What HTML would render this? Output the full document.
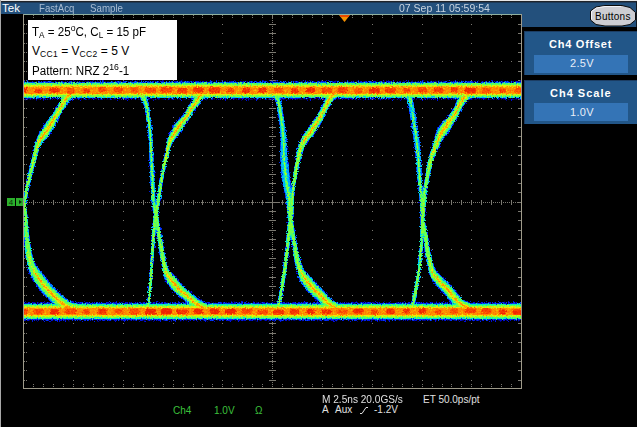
<!DOCTYPE html><html><head><meta charset="utf-8"><style>
html,body{margin:0;padding:0;width:637px;height:427px;overflow:hidden;background:#000}
body{position:relative;font-family:"Liberation Sans",sans-serif}
.t{position:absolute;white-space:nowrap;line-height:1}
</style></head><body>
<svg width="637" height="427" viewBox="0 0 637 427" style="position:absolute;left:0;top:0">
<defs><linearGradient id="tg" x1="0" x2="1" y1="0" y2="0"><stop offset="0" stop-color="#303030"/><stop offset="0.6" stop-color="#b8b8b8"/><stop offset="1" stop-color="#e8e8e8"/></linearGradient></defs>
<rect x="0" y="0" width="637" height="1" fill="#e6e6e6"/>
<rect x="0" y="1" width="637" height="1" fill="#20242a"/>
<rect x="0" y="2" width="637" height="1" fill="#1e3a58"/>
<rect x="0" y="3" width="637" height="11" fill="#23507c"/>
<rect x="522" y="14" width="115" height="13" fill="#23507c"/>
<rect x="0" y="0" width="1" height="427" fill="#a8a8a8"/>
<g shape-rendering="crispEdges">
<rect x="23" y="14" width="499" height="1" fill="#8fb0a0"/>
<rect x="23" y="388" width="499" height="1" fill="#9e9a8a"/>
<rect x="23" y="14" width="1" height="375" fill="#9e9a8a"/>
<rect x="521" y="14" width="1" height="375" fill="#9e9a8a"/>
<path d="M103,342h1v1h-1z M173,200h1v5h-1z M491,15h1v1h-1z M113,202h1v1h-1z M73,99h1v1h-1z M422,43h1v1h-1z M183,17h1v1h-1z M24,314h1v1h-1z M183,386h1v1h-1z M491,200h1v5h-1z M173,352h1v1h-1z M133,108h1v1h-1z M103,61h1v1h-1z M501,386h1v1h-1z M272,298h1v1h-1z M501,342h1v1h-1z M259,202h1v1h-1z M43,200h1v5h-1z M252,200h1v5h-1z M24,33h1v1h-1z M303,202h1v1h-1z M272,76h1v1h-1z M518,155h3v1h-3z M272,308h1v1h-1z M73,211h1v1h-1z M129,202h1v1h-1z M471,211h1v1h-1z M272,164h1v1h-1z M518,202h3v1h-3z M113,155h1v1h-1z M83,108h1v1h-1z M73,174h1v1h-1z M173,342h1v1h-1z M195,202h1v1h-1z M272,212h1v1h-1z M372,295h1v1h-1z M272,332h1v1h-1z M25,202h1v1h-1z M402,15h1v1h-1z M491,202h1v1h-1z M322,202h1v1h-1z M292,155h1v1h-1z M272,68h1v1h-1z M307,202h1v1h-1z M292,200h1v5h-1z M395,202h1v1h-1z M302,295h1v1h-1z M343,202h1v1h-1z M269,267h7v1h-7z M461,200h1v5h-1z M43,342h1v1h-1z M422,333h1v1h-1z M518,89h3v1h-3z M272,300h1v1h-1z M73,61h1v1h-1z M83,17h1v1h-1z M24,220h1v1h-1z M171,202h1v1h-1z M332,61h1v1h-1z M272,34h1v1h-1z M73,108h1v1h-1z M83,249h1v1h-1z M53,202h1v1h-1z M322,89h1v1h-1z M272,324h1v1h-1z M26,239h1v1h-1z M199,202h1v1h-1z M269,239h7v1h-7z M272,102h1v1h-1z M372,174h1v1h-1z M163,249h1v1h-1z M511,249h1v1h-1z M481,202h1v1h-1z M123,146h1v1h-1z M518,61h3v1h-3z M113,15h1v1h-1z M422,200h1v5h-1z M33,17h1v1h-1z M322,99h1v1h-1z M33,386h1v1h-1z M257,202h1v1h-1z M269,286h7v1h-7z M272,334h1v1h-1z M272,290h1v1h-1z M471,117h1v1h-1z M292,342h1v1h-1z M272,70h1v1h-1z M292,17h1v1h-1z M402,342h1v1h-1z M33,249h1v1h-1z M24,380h1v1h-1z M285,202h1v1h-1z M493,202h1v1h-1z M272,238h1v1h-1z M501,200h1v5h-1z M173,211h1v1h-1z M272,358h1v1h-1z M518,211h3v1h-3z M491,108h1v1h-1z M115,202h1v1h-1z M123,370h1v1h-1z M461,249h1v1h-1z M322,108h1v1h-1z M203,202h1v1h-1z M272,94h1v1h-1z M53,155h1v1h-1z M63,15h1v1h-1z M63,384h1v1h-1z M207,202h1v1h-1z M322,15h1v1h-1z M272,326h1v1h-1z M111,202h1v1h-1z M133,200h1v5h-1z M173,80h1v1h-1z M518,220h3v1h-3z M297,202h1v1h-1z M45,202h1v1h-1z M481,61h1v1h-1z M443,202h1v1h-1z M429,202h1v1h-1z M518,183h3v1h-3z M201,202h1v1h-1z M442,342h1v1h-1z M412,295h1v1h-1z M173,127h1v1h-1z M272,292h1v1h-1z M511,155h1v1h-1z M131,202h1v1h-1z M432,386h1v1h-1z M173,230h1v1h-1z M222,384h1v1h-1z M501,17h1v1h-1z M183,249h1v1h-1z M222,305h1v1h-1z M269,333h7v1h-7z M272,220h1v1h-1z M197,202h1v1h-1z M405,202h1v1h-1z M123,386h1v1h-1z M491,295h1v1h-1z M272,316h1v1h-1z M501,249h1v1h-1z M73,314h1v1h-1z M123,200h1v5h-1z M232,386h1v1h-1z M63,386h1v1h-1z M49,202h1v1h-1z M24,99h1v1h-1z M272,264h1v1h-1z M433,202h1v1h-1z M272,188h1v1h-1z M26,71h1v1h-1z M331,202h1v1h-1z M252,108h1v1h-1z M461,155h1v1h-1z M24,108h1v1h-1z M53,61h1v1h-1z M367,202h1v1h-1z M123,352h1v1h-1z M143,155h1v1h-1z M392,342h1v1h-1z M451,17h1v1h-1z M209,202h1v1h-1z M322,305h1v1h-1z M153,384h1v1h-1z M342,108h1v1h-1z M73,286h1v1h-1z M222,295h1v1h-1z M422,230h1v1h-1z M451,249h1v1h-1z M272,154h1v1h-1z M422,108h1v1h-1z M322,24h1v1h-1z M519,202h1v1h-1z M322,314h1v1h-1z M382,295h1v1h-1z M65,202h1v1h-1z M83,384h1v1h-1z M322,192h1v1h-1z M272,178h1v1h-1z M123,202h1v1h-1z M93,155h1v1h-1z M123,17h1v1h-1z M471,286h1v1h-1z M518,277h3v1h-3z M371,202h1v1h-1z M292,108h1v1h-1z M173,136h1v1h-1z M422,323h1v1h-1z M382,342h1v1h-1z M441,202h1v1h-1z M213,202h1v1h-1z M183,155h1v1h-1z M272,126h1v1h-1z M372,230h1v1h-1z M352,155h1v1h-1z M332,249h1v1h-1z M272,146h1v1h-1z M103,384h1v1h-1z M501,155h1v1h-1z M73,220h1v1h-1z M279,202h1v1h-1z M202,17h1v1h-1z M222,314h1v1h-1z M412,108h1v1h-1z M442,155h1v1h-1z M269,342h7v1h-7z M222,192h1v1h-1z M422,127h1v1h-1z M322,164h1v1h-1z M153,15h1v1h-1z M362,15h1v1h-1z M272,214h1v1h-1z M193,295h1v1h-1z M272,92h1v1h-1z M123,258h1v1h-1z M83,342h1v1h-1z M143,61h1v1h-1z M422,295h1v1h-1z M471,384h1v1h-1z M272,382h1v1h-1z M372,17h1v1h-1z M471,305h1v1h-1z M47,202h1v1h-1z M387,202h1v1h-1z M24,202h1v1h-1z M445,202h1v1h-1z M431,202h1v1h-1z M269,24h7v1h-7z M232,15h1v1h-1z M321,202h1v1h-1z M272,180h1v1h-1z M379,202h1v1h-1z M269,314h7v1h-7z M362,108h1v1h-1z M372,249h1v1h-1z M222,164h1v1h-1z M272,350h1v1h-1z M173,323h1v1h-1z M63,200h1v5h-1z M312,15h1v1h-1z M73,295h1v1h-1z M272,348h1v1h-1z M302,200h1v5h-1z M312,384h1v1h-1z M402,249h1v1h-1z M242,17h1v1h-1z M422,117h1v1h-1z M222,333h1v1h-1z M269,361h7v1h-7z M372,352h1v1h-1z M272,84h1v1h-1z M123,108h1v1h-1z M93,61h1v1h-1z M26,380h1v1h-1z M123,43h1v1h-1z M59,202h1v1h-1z M103,15h1v1h-1z M322,323h1v1h-1z M153,202h1v1h-1z M322,286h1v1h-1z M272,152h1v1h-1z M518,286h3v1h-3z M26,99h1v1h-1z M272,172h1v1h-1z M87,202h1v1h-1z M435,202h1v1h-1z M43,384h1v1h-1z M442,61h1v1h-1z M369,202h1v1h-1z M123,52h1v1h-1z M442,17h1v1h-1z M272,340h1v1h-1z M272,240h1v1h-1z M53,386h1v1h-1z M113,295h1v1h-1z M272,118h1v1h-1z M233,202h1v1h-1z M442,249h1v1h-1z M232,342h1v1h-1z M202,295h1v1h-1z M26,314h1v1h-1z M33,155h1v1h-1z M372,43h1v1h-1z M518,258h3v1h-3z M312,17h1v1h-1z M481,386h1v1h-1z M123,267h1v1h-1z M272,144h1v1h-1z M312,386h1v1h-1z M272,22h1v1h-1z M322,220h1v1h-1z M63,249h1v1h-1z M272,206h1v1h-1z M262,108h1v1h-1z M232,61h1v1h-1z M103,202h1v1h-1z M272,376h1v1h-1z M26,323h1v1h-1z M173,305h1v1h-1z M272,254h1v1h-1z M272,374h1v1h-1z M409,202h1v1h-1z M402,384h1v1h-1z M372,258h1v1h-1z M272,295h1v1h-1z M26,286h1v1h-1z M272,110h1v1h-1z M163,15h1v1h-1z M511,384h1v1h-1z M465,202h1v1h-1z M237,202h1v1h-1z M123,239h1v1h-1z M252,15h1v1h-1z M269,230h7v1h-7z M281,202h1v1h-1z M272,278h1v1h-1z M272,342h1v1h-1z M163,200h1v5h-1z M73,352h1v1h-1z M392,249h1v1h-1z M243,202h1v1h-1z M24,183h1v1h-1z M335,202h1v1h-1z M322,380h1v1h-1z M107,202h1v1h-1z M272,366h1v1h-1z M73,71h1v1h-1z M41,202h1v1h-1z M432,155h1v1h-1z M222,89h1v1h-1z M26,202h1v1h-1z M461,342h1v1h-1z M425,202h1v1h-1z M262,295h1v1h-1z M173,202h1v1h-1z M483,202h1v1h-1z M518,352h3v1h-3z M222,52h1v1h-1z M269,80h7v1h-7z M26,305h1v1h-1z M505,202h1v1h-1z M402,386h1v1h-1z M272,48h1v1h-1z M461,61h1v1h-1z M269,249h7v1h-7z M292,384h1v1h-1z M272,112h1v1h-1z M123,136h1v1h-1z M471,80h1v1h-1z M193,202h1v1h-1z M163,342h1v1h-1z M133,295h1v1h-1z M149,202h1v1h-1z M272,280h1v1h-1z M269,89h7v1h-7z M272,16h1v1h-1z M518,174h3v1h-3z M451,155h1v1h-1z M31,202h1v1h-1z M481,15h1v1h-1z M89,202h1v1h-1z M177,202h1v1h-1z M269,136h7v1h-7z M518,342h3v1h-3z M363,202h1v1h-1z M272,368h1v1h-1z M481,200h1v5h-1z M392,384h1v1h-1z M269,99h7v1h-7z M312,200h1v5h-1z M432,342h1v1h-1z M93,386h1v1h-1z M491,17h1v1h-1z M491,386h1v1h-1z M73,361h1v1h-1z M235,202h1v1h-1z M143,386h1v1h-1z M242,249h1v1h-1z M271,202h1v1h-1z M471,99h1v1h-1z M63,108h1v1h-1z M33,61h1v1h-1z M518,146h3v1h-3z M432,61h1v1h-1z M518,24h3v1h-3z M402,17h1v1h-1z M471,202h1v1h-1z M123,323h1v1h-1z M123,384h1v1h-1z M26,211h1v1h-1z M39,202h1v1h-1z M372,146h1v1h-1z M518,361h3v1h-3z M26,174h1v1h-1z M202,155h1v1h-1z M451,342h1v1h-1z M382,384h1v1h-1z M518,33h3v1h-3z M185,202h1v1h-1z M302,386h1v1h-1z M481,17h1v1h-1z M362,295h1v1h-1z M73,277h1v1h-1z M53,200h1v5h-1z M123,127h1v1h-1z M269,323h7v1h-7z M372,314h1v1h-1z M481,342h1v1h-1z M272,230h1v1h-1z M471,89h1v1h-1z M275,202h1v1h-1z M392,386h1v1h-1z M451,61h1v1h-1z M362,342h1v1h-1z M421,202h1v1h-1z M407,202h1v1h-1z M24,71h1v1h-1z M163,155h1v1h-1z M179,202h1v1h-1z M372,361h1v1h-1z M518,43h3v1h-3z M24,89h1v1h-1z M312,249h1v1h-1z M372,33h1v1h-1z M26,61h1v1h-1z M212,61h1v1h-1z M123,342h1v1h-1z M93,295h1v1h-1z M372,323h1v1h-1z M26,230h1v1h-1z M73,249h1v1h-1z M43,202h1v1h-1z M79,202h1v1h-1z M422,71h1v1h-1z M427,202h1v1h-1z M511,200h1v5h-1z M242,155h1v1h-1z M24,286h1v1h-1z M372,370h1v1h-1z M352,295h1v1h-1z M173,380h1v1h-1z M272,222h1v1h-1z M153,108h1v1h-1z M123,61h1v1h-1z M193,61h1v1h-1z M507,202h1v1h-1z M193,17h1v1h-1z M322,295h1v1h-1z M471,108h1v1h-1z M173,99h1v1h-1z M283,202h1v1h-1z M422,286h1v1h-1z M272,168h1v1h-1z M282,342h1v1h-1z M252,295h1v1h-1z M345,202h1v1h-1z M269,117h7v1h-7z M113,17h1v1h-1z M372,52h1v1h-1z M187,202h1v1h-1z M143,15h1v1h-1z M143,384h1v1h-1z M173,267h1v1h-1z M26,220h1v1h-1z M469,202h1v1h-1z M73,183h1v1h-1z M113,200h1v5h-1z M372,220h1v1h-1z M511,295h1v1h-1z M272,72h1v1h-1z M372,155h1v1h-1z M202,200h1v5h-1z M312,108h1v1h-1z M518,370h3v1h-3z M272,256h1v1h-1z M73,146h1v1h-1z M222,155h1v1h-1z M292,15h1v1h-1z M511,342h1v1h-1z M173,277h1v1h-1z M402,200h1v5h-1z M103,108h1v1h-1z M312,155h1v1h-1z M422,258h1v1h-1z M322,174h1v1h-1z M101,202h1v1h-1z M272,160h1v1h-1z M24,80h1v1h-1z M272,38h1v1h-1z M372,164h1v1h-1z M375,202h1v1h-1z M361,202h1v1h-1z M26,192h1v1h-1z M419,202h1v1h-1z M191,202h1v1h-1z M322,277h1v1h-1z M222,127h1v1h-1z M501,108h1v1h-1z M183,384h1v1h-1z M125,202h1v1h-1z M173,286h1v1h-1z M509,202h1v1h-1z M73,136h1v1h-1z M242,200h1v5h-1z M518,249h3v1h-3z M24,295h1v1h-1z M83,155h1v1h-1z M53,108h1v1h-1z M442,15h1v1h-1z M143,342h1v1h-1z M272,294h1v1h-1z M342,295h1v1h-1z M272,194h1v1h-1z M442,200h1v5h-1z M222,277h1v1h-1z M282,61h1v1h-1z M277,202h1v1h-1z M202,249h1v1h-1z M322,127h1v1h-1z M365,202h1v1h-1z M173,108h1v1h-1z M313,202h1v1h-1z M272,362h1v1h-1z M423,202h1v1h-1z M422,380h1v1h-1z M372,61h1v1h-1z M299,202h1v1h-1z M272,98h1v1h-1z M26,89h1v1h-1z M173,71h1v1h-1z M43,61h1v1h-1z M272,162h1v1h-1z M357,202h1v1h-1z M53,17h1v1h-1z M272,282h1v1h-1z M141,202h1v1h-1z M302,17h1v1h-1z M73,192h1v1h-1z M183,295h1v1h-1z M332,108h1v1h-1z M302,61h1v1h-1z M232,384h1v1h-1z M471,192h1v1h-1z M222,286h1v1h-1z M272,330h1v1h-1z M73,155h1v1h-1z M43,108h1v1h-1z M422,99h1v1h-1z M26,277h1v1h-1z M222,249h1v1h-1z M272,186h1v1h-1z M183,342h1v1h-1z M37,202h1v1h-1z M169,202h1v1h-1z M272,64h1v1h-1z M392,15h1v1h-1z M123,230h1v1h-1z M242,386h1v1h-1z M133,249h1v1h-1z M272,234h1v1h-1z M322,183h1v1h-1z M355,202h1v1h-1z M392,200h1v5h-1z M322,61h1v1h-1z M471,277h1v1h-1z M317,202h1v1h-1z M272,296h1v1h-1z M24,174h1v1h-1z M91,202h1v1h-1z M73,164h1v1h-1z M422,314h1v1h-1z M471,200h1v5h-1z M471,164h1v1h-1z M373,202h1v1h-1z M83,61h1v1h-1z M173,295h1v1h-1z M262,17h1v1h-1z M272,320h1v1h-1z M272,36h1v1h-1z M272,384h1v1h-1z M272,100h1v1h-1z M211,202h1v1h-1z M272,56h1v1h-1z M491,155h1v1h-1z M222,183h1v1h-1z M262,249h1v1h-1z M402,108h1v1h-1z M33,15h1v1h-1z M269,220h7v1h-7z M33,384h1v1h-1z M123,249h1v1h-1z M272,288h1v1h-1z M359,202h1v1h-1z M272,124h1v1h-1z M447,202h1v1h-1z M461,386h1v1h-1z M461,15h1v1h-1z M272,66h1v1h-1z M81,202h1v1h-1z M113,384h1v1h-1z M461,384h1v1h-1z M471,174h1v1h-1z M322,370h1v1h-1z M272,356h1v1h-1z M272,312h1v1h-1z M73,17h1v1h-1z M24,361h1v1h-1z M73,386h1v1h-1z M173,174h1v1h-1z M347,202h1v1h-1z M105,202h1v1h-1z M272,90h1v1h-1z M215,202h1v1h-1z M481,155h1v1h-1z M163,17h1v1h-1z M251,202h1v1h-1z M272,260h1v1h-1z M163,386h1v1h-1z M123,99h1v1h-1z M26,295h1v1h-1z M442,108h1v1h-1z M412,61h1v1h-1z M272,322h1v1h-1z M212,249h1v1h-1z M269,380h7v1h-7z M272,58h1v1h-1z M24,43h1v1h-1z M402,295h1v1h-1z M309,202h1v1h-1z M85,202h1v1h-1z M93,200h1v5h-1z M292,295h1v1h-1z M202,386h1v1h-1z M352,17h1v1h-1z M33,342h1v1h-1z M242,15h1v1h-1z M24,146h1v1h-1z M518,164h3v1h-3z M403,202h1v1h-1z M491,61h1v1h-1z M518,305h3v1h-3z M432,15h1v1h-1z M272,82h1v1h-1z M151,202h1v1h-1z M461,202h1v1h-1z M432,384h1v1h-1z M461,17h1v1h-1z M352,200h1v5h-1z M113,386h1v1h-1z M337,202h1v1h-1z M501,15h1v1h-1z M352,249h1v1h-1z M322,352h1v1h-1z M255,202h1v1h-1z M272,314h1v1h-1z M372,386h1v1h-1z M272,30h1v1h-1z M422,192h1v1h-1z M193,155h1v1h-1z M24,155h1v1h-1z M422,155h1v1h-1z M392,108h1v1h-1z M127,202h1v1h-1z M322,71h1v1h-1z M133,155h1v1h-1z M269,277h7v1h-7z M73,43h1v1h-1z M471,43h1v1h-1z M53,15h1v1h-1z M451,386h1v1h-1z M222,61h1v1h-1z M422,202h1v1h-1z M53,384h1v1h-1z M451,15h1v1h-1z M93,17h1v1h-1z M451,384h1v1h-1z M272,286h1v1h-1z M24,370h1v1h-1z M341,202h1v1h-1z M27,202h1v1h-1z M272,210h1v1h-1z M173,183h1v1h-1z M422,370h1v1h-1z M411,202h1v1h-1z M183,202h1v1h-1z M382,61h1v1h-1z M272,272h1v1h-1z M93,249h1v1h-1z M302,249h1v1h-1z M471,380h1v1h-1z M222,71h1v1h-1z M471,52h1v1h-1z M73,267h1v1h-1z M422,211h1v1h-1z M249,202h1v1h-1z M73,15h1v1h-1z M222,361h1v1h-1z M422,89h1v1h-1z M382,108h1v1h-1z M412,155h1v1h-1z M471,15h1v1h-1z M382,249h1v1h-1z M63,295h1v1h-1z M222,239h1v1h-1z M26,352h1v1h-1z M272,176h1v1h-1z M123,15h1v1h-1z M332,15h1v1h-1z M26,24h1v1h-1z M193,342h1v1h-1z M449,202h1v1h-1z M252,17h1v1h-1z M123,305h1v1h-1z M53,342h1v1h-1z M485,202h1v1h-1z M392,295h1v1h-1z M383,202h1v1h-1z M471,267h1v1h-1z M269,108h7v1h-7z M272,244h1v1h-1z M518,314h3v1h-3z M133,17h1v1h-1z M342,17h1v1h-1z M342,386h1v1h-1z M471,230h1v1h-1z M269,71h7v1h-7z M272,200h1v5h-1z M26,361h1v1h-1z M123,24h1v1h-1z M342,200h1v5h-1z M422,61h1v1h-1z M349,202h1v1h-1z M362,155h1v1h-1z M342,249h1v1h-1z M272,148h1v1h-1z M471,71h1v1h-1z M253,202h1v1h-1z M33,200h1v5h-1z M282,15h1v1h-1z M43,295h1v1h-1z M282,384h1v1h-1z M212,17h1v1h-1z M385,202h1v1h-1z M322,80h1v1h-1z M212,342h1v1h-1z M153,17h1v1h-1z M222,258h1v1h-1z M471,239h1v1h-1z M29,202h1v1h-1z M372,15h1v1h-1z M117,202h1v1h-1z M372,384h1v1h-1z M173,89h1v1h-1z M272,236h1v1h-1z M292,386h1v1h-1z M26,183h1v1h-1z M272,114h1v1h-1z M399,202h1v1h-1z M372,183h1v1h-1z M352,108h1v1h-1z M269,127h7v1h-7z M332,17h1v1h-1z M518,333h3v1h-3z M242,108h1v1h-1z M26,146h1v1h-1z M57,202h1v1h-1z M173,192h1v1h-1z M269,295h7v1h-7z M412,17h1v1h-1z M412,386h1v1h-1z M272,202h1v1h-1z M222,80h1v1h-1z M322,52h1v1h-1z M422,220h1v1h-1z M518,52h3v1h-3z M123,211h1v1h-1z M83,295h1v1h-1z M222,370h1v1h-1z M113,342h1v1h-1z M412,249h1v1h-1z M372,333h1v1h-1z M272,370h1v1h-1z M422,183h1v1h-1z M202,342h1v1h-1z M261,202h1v1h-1z M33,202h1v1h-1z M26,33h1v1h-1z M272,270h1v1h-1z M121,202h1v1h-1z M272,106h1v1h-1z M352,384h1v1h-1z M103,17h1v1h-1z M165,202h1v1h-1z M123,314h1v1h-1z M282,386h1v1h-1z M113,61h1v1h-1z M322,267h1v1h-1z M99,202h1v1h-1z M439,202h1v1h-1z M262,155h1v1h-1z M432,200h1v5h-1z M232,108h1v1h-1z M202,61h1v1h-1z M272,338h1v1h-1z M497,202h1v1h-1z M471,361h1v1h-1z M442,384h1v1h-1z M26,80h1v1h-1z M272,174h1v1h-1z M24,258h1v1h-1z M372,342h1v1h-1z M272,52h1v1h-1z M26,370h1v1h-1z M123,33h1v1h-1z M272,116h1v1h-1z M372,305h1v1h-1z M242,295h1v1h-1z M302,155h1v1h-1z M272,284h1v1h-1z M133,15h1v1h-1z M272,262h1v1h-1z M272,20h1v1h-1z M272,140h1v1h-1z M123,164h1v1h-1z M242,342h1v1h-1z M339,202h1v1h-1z M272,204h1v1h-1z M372,24h1v1h-1z M272,61h1v1h-1z M518,239h3v1h-3z M26,52h1v1h-1z M153,295h1v1h-1z M382,200h1v5h-1z M273,202h1v1h-1z M173,239h1v1h-1z M205,202h1v1h-1z M123,333h1v1h-1z M302,384h1v1h-1z M272,372h1v1h-1z M451,200h1v5h-1z M372,192h1v1h-1z M471,295h1v1h-1z M487,202h1v1h-1z M272,44h1v1h-1z M173,17h1v1h-1z M77,202h1v1h-1z M272,108h1v1h-1z M272,228h1v1h-1z M352,386h1v1h-1z M24,277h1v1h-1z M432,17h1v1h-1z M272,276h1v1h-1z M173,249h1v1h-1z M266,202h13v1h-13z M272,132h1v1h-1z M24,117h1v1h-1z M272,196h1v1h-1z M123,220h1v1h-1z M432,249h1v1h-1z M491,249h1v1h-1z M247,202h1v1h-1z M312,295h1v1h-1z M73,333h1v1h-1z M461,108h1v1h-1z M422,277h1v1h-1z M291,202h1v1h-1z M262,61h1v1h-1z M272,364h1v1h-1z M24,164h1v1h-1z M173,258h1v1h-1z M133,342h1v1h-1z M103,295h1v1h-1z M119,202h1v1h-1z M272,78h1v1h-1z M272,142h1v1h-1z M155,202h1v1h-1z M24,267h1v1h-1z M422,17h1v1h-1z M437,202h1v1h-1z M222,146h1v1h-1z M272,310h1v1h-1z M495,202h1v1h-1z M147,202h1v1h-1z M163,108h1v1h-1z M133,61h1v1h-1z M269,183h7v1h-7z M272,46h1v1h-1z M53,249h1v1h-1z M272,166h1v1h-1z M517,202h1v1h-1z M73,200h1v5h-1z M153,386h1v1h-1z M282,200h1v5h-1z M333,202h1v1h-1z M295,202h1v1h-1z M292,61h1v1h-1z M518,108h3v1h-3z M272,134h1v1h-1z M73,24h1v1h-1z M33,108h1v1h-1z M322,146h1v1h-1z M432,108h1v1h-1z M332,384h1v1h-1z M518,71h3v1h-3z M159,202h1v1h-1z M272,302h1v1h-1z M73,127h1v1h-1z M189,202h1v1h-1z M499,202h1v1h-1z M93,384h1v1h-1z M26,258h1v1h-1z M232,200h1v5h-1z M518,323h3v1h-3z M491,384h1v1h-1z M322,155h1v1h-1z M123,89h1v1h-1z M322,200h1v5h-1z M332,295h1v1h-1z M272,268h1v1h-1z M103,386h1v1h-1z M163,295h1v1h-1z M73,342h1v1h-1z M269,305h7v1h-7z M272,28h1v1h-1z M252,155h1v1h-1z M282,17h1v1h-1z M471,136h1v1h-1z M245,202h1v1h-1z M518,127h3v1h-3z M451,108h1v1h-1z M332,342h1v1h-1z M391,202h1v1h-1z M163,202h1v1h-1z M272,336h1v1h-1z M362,61h1v1h-1z M282,249h1v1h-1z M372,80h1v1h-1z M325,202h1v1h-1z M311,202h1v1h-1z M481,108h1v1h-1z M518,295h3v1h-3z M471,183h1v1h-1z M113,249h1v1h-1z M83,202h1v1h-1z M518,230h3v1h-3z M167,202h1v1h-1z M93,342h1v1h-1z M229,202h1v1h-1z M222,200h1v5h-1z M269,192h7v1h-7z M372,127h1v1h-1z M511,202h1v1h-1z M272,304h1v1h-1z M26,155h1v1h-1z M173,386h1v1h-1z M212,155h1v1h-1z M382,15h1v1h-1z M352,342h1v1h-1z M63,17h1v1h-1z M287,202h1v1h-1z M222,352h1v1h-1z M491,342h1v1h-1z M477,202h1v1h-1z M322,342h1v1h-1z M518,117h3v1h-3z M322,17h1v1h-1z M272,328h1v1h-1z M73,33h1v1h-1z M322,386h1v1h-1z M272,252h1v1h-1z M381,202h1v1h-1z M392,17h1v1h-1z M24,52h1v1h-1z M352,61h1v1h-1z M26,164h1v1h-1z M173,146h1v1h-1z M252,342h1v1h-1z M315,202h1v1h-1z M173,24h1v1h-1z M322,249h1v1h-1z M183,200h1v5h-1z M157,202h1v1h-1z M173,314h1v1h-1z M26,267h1v1h-1z M262,384h1v1h-1z M143,202h1v1h-1z M73,230h1v1h-1z M83,200h1v5h-1z M481,295h1v1h-1z M489,202h1v1h-1z M471,370h1v1h-1z M269,211h7v1h-7z M422,52h1v1h-1z M342,155h1v1h-1z M269,352h7v1h-7z M193,15h1v1h-1z M222,202h1v1h-1z M193,384h1v1h-1z M222,17h1v1h-1z M173,361h1v1h-1z M222,386h1v1h-1z M422,15h1v1h-1z M173,33h1v1h-1z M302,342h1v1h-1z M282,155h1v1h-1z M511,61h1v1h-1z M518,136h3v1h-3z M382,17h1v1h-1z M272,196h1v13h-1z M319,202h1v1h-1z M422,352h1v1h-1z M372,89h1v1h-1z M511,108h1v1h-1z M173,43h1v1h-1z M161,202h1v1h-1z M272,190h1v1h-1z M422,24h1v1h-1z M323,202h1v1h-1z M479,202h1v1h-1z M372,136h1v1h-1z M241,202h1v1h-1z M227,202h1v1h-1z M212,384h1v1h-1z M322,43h1v1h-1z M412,15h1v1h-1z M272,158h1v1h-1z M501,202h1v1h-1z M153,200h1v5h-1z M262,386h1v1h-1z M123,117h1v1h-1z M471,386h1v1h-1z M153,249h1v1h-1z M272,156h1v1h-1z M422,239h1v1h-1z M342,342h1v1h-1z M422,174h1v1h-1z M412,200h1v5h-1z M322,211h1v1h-1z M193,386h1v1h-1z M282,108h1v1h-1z M252,61h1v1h-1z M24,61h1v1h-1z M397,202h1v1h-1z M173,155h1v1h-1z M143,108h1v1h-1z M272,104h1v1h-1z M422,342h1v1h-1z M272,60h1v1h-1z M322,258h1v1h-1z M372,108h1v1h-1z M342,61h1v1h-1z M471,352h1v1h-1z M222,108h1v1h-1z M327,202h1v1h-1z M222,43h1v1h-1z M73,239h1v1h-1z M202,15h1v1h-1z M202,384h1v1h-1z M73,117h1v1h-1z M272,128h1v1h-1z M272,192h1v1h-1z M222,211h1v1h-1z M43,155h1v1h-1z M422,146h1v1h-1z M173,370h1v1h-1z M372,117h1v1h-1z M123,277h1v1h-1z M95,202h1v1h-1z M272,360h1v1h-1z M103,200h1v5h-1z M222,380h1v1h-1z M183,61h1v1h-1z M212,386h1v1h-1z M123,155h1v1h-1z M103,249h1v1h-1z M272,32h1v1h-1z M322,230h1v1h-1z M272,96h1v1h-1z M377,202h1v1h-1z M272,216h1v1h-1z M26,43h1v1h-1z M413,202h1v1h-1z M43,15h1v1h-1z M501,61h1v1h-1z M412,342h1v1h-1z M222,15h1v1h-1z M269,43h7v1h-7z M471,17h1v1h-1z M35,202h1v1h-1z M183,108h1v1h-1z M422,361h1v1h-1z M272,15h1v1h-1z M173,52h1v1h-1z M362,249h1v1h-1z M73,89h1v1h-1z M422,33h1v1h-1z M133,384h1v1h-1z M272,120h1v1h-1z M272,184h1v1h-1z M143,295h1v1h-1z M471,249h1v1h-1z M232,17h1v1h-1z M73,258h1v1h-1z M222,267h1v1h-1z M272,62h1v1h-1z M272,182h1v1h-1z M242,384h1v1h-1z M272,246h1v1h-1z M422,80h1v1h-1z M322,117h1v1h-1z M181,202h1v1h-1z M272,352h1v1h-1z M222,230h1v1h-1z M312,61h1v1h-1z M239,202h1v1h-1z M232,249h1v1h-1z M173,61h1v1h-1z M272,130h1v1h-1z M272,86h1v1h-1z M272,150h1v1h-1z M123,174h1v1h-1z M329,202h1v1h-1z M471,258h1v1h-1z M417,202h1v1h-1z M475,202h1v1h-1z M51,202h1v1h-1z M262,15h1v1h-1z M351,202h1v1h-1z M272,318h1v1h-1z M518,192h3v1h-3z M372,202h1v1h-1z M272,218h1v1h-1z M222,117h1v1h-1z M272,54h1v1h-1z M302,108h1v1h-1z M262,200h1v5h-1z M43,17h1v1h-1z M43,386h1v1h-1z M332,200h1v5h-1z M272,17h1v1h-1z M272,386h1v1h-1z M193,200h1v5h-1z M222,220h1v1h-1z M26,333h1v1h-1z M322,136h1v1h-1z M221,202h1v1h-1z M133,386h1v1h-1z M272,122h1v1h-1z M442,295h1v1h-1z M503,202h1v1h-1z M322,239h1v1h-1z M272,354h1v1h-1z M93,202h1v1h-1z M55,202h1v1h-1z M24,230h1v1h-1z M73,384h1v1h-1z M272,24h1v1h-1z M26,342h1v1h-1z M272,88h1v1h-1z M212,15h1v1h-1z M269,146h7v1h-7z M372,277h1v1h-1z M163,384h1v1h-1z M143,200h1v5h-1z M272,378h1v1h-1z M402,61h1v1h-1z M83,386h1v1h-1z M212,200h1v5h-1z M372,200h1v5h-1z M263,202h1v1h-1z M262,342h1v1h-1z M232,295h1v1h-1z M63,155h1v1h-1z M225,202h1v1h-1z M222,99h1v1h-1z M269,202h1v1h-1z M352,15h1v1h-1z M272,344h1v1h-1z M392,155h1v1h-1z M63,202h1v1h-1z M123,183h1v1h-1z M97,202h1v1h-1z M133,202h1v1h-1z M272,80h1v1h-1z M193,249h1v1h-1z M252,249h1v1h-1z M24,249h1v1h-1z M67,202h1v1h-1z M415,202h1v1h-1z M24,127h1v1h-1z M473,202h1v1h-1z M451,202h1v1h-1z M362,17h1v1h-1z M372,211h1v1h-1z M272,248h1v1h-1z M362,386h1v1h-1z M123,380h1v1h-1z M362,200h1v5h-1z M267,202h1v1h-1z M272,26h1v1h-1z M123,192h1v1h-1z M442,386h1v1h-1z M73,305h1v1h-1z M422,249h1v1h-1z M93,108h1v1h-1z M272,380h1v1h-1z M222,323h1v1h-1z M272,258h1v1h-1z M24,136h1v1h-1z M219,202h1v1h-1z M422,136h1v1h-1z M382,155h1v1h-1z M63,342h1v1h-1z M33,295h1v1h-1z M515,202h1v1h-1z M322,333h1v1h-1z M137,202h1v1h-1z M93,15h1v1h-1z M302,15h1v1h-1z M471,146h1v1h-1z M173,117h1v1h-1z M71,202h1v1h-1z M461,295h1v1h-1z M455,202h1v1h-1z M272,346h1v1h-1z M353,202h1v1h-1z M513,202h1v1h-1z M471,314h1v1h-1z M269,155h7v1h-7z M272,18h1v1h-1z M389,202h1v1h-1z M269,33h7v1h-7z M173,164h1v1h-1z M193,108h1v1h-1z M123,71h1v1h-1z M269,202h7v1h-7z M322,384h1v1h-1z M392,61h1v1h-1z M272,250h1v1h-1z M332,155h1v1h-1z M471,33h1v1h-1z M518,80h3v1h-3z M481,249h1v1h-1z M223,202h1v1h-1z M222,342h1v1h-1z M269,370h7v1h-7z M252,384h1v1h-1z M83,15h1v1h-1z M272,242h1v1h-1z M272,274h1v1h-1z M272,198h1v1h-1z M289,202h1v1h-1z M342,15h1v1h-1z M75,202h1v1h-1z M61,202h1v1h-1z M24,323h1v1h-1z M123,286h1v1h-1z M342,384h1v1h-1z M511,15h1v1h-1z M459,202h1v1h-1z M145,202h1v1h-1z M26,108h1v1h-1z M393,202h1v1h-1z M471,333h1v1h-1z M269,174h7v1h-7z M518,380h3v1h-3z M212,108h1v1h-1z M222,24h1v1h-1z M422,384h1v1h-1z M463,202h1v1h-1z M272,266h1v1h-1z M269,52h7v1h-7z M432,295h1v1h-1z M481,384h1v1h-1z M272,208h1v1h-1z M43,249h1v1h-1z M501,295h1v1h-1z M265,202h1v1h-1z M382,386h1v1h-1z M272,249h1v1h-1z M24,333h1v1h-1z M301,202h1v1h-1z M63,61h1v1h-1z M73,323h1v1h-1z M422,267h1v1h-1z M518,99h3v1h-3z M153,155h1v1h-1z M272,170h1v1h-1z M53,295h1v1h-1z M26,117h1v1h-1z M402,155h1v1h-1z M372,380h1v1h-1z M272,232h1v1h-1z M471,220h1v1h-1z M231,202h1v1h-1z M293,202h1v1h-1z M471,155h1v1h-1z M518,267h3v1h-3z M123,361h1v1h-1z M135,202h1v1h-1z M252,386h1v1h-1z M113,108h1v1h-1z M222,136h1v1h-1z M26,249h1v1h-1z M24,342h1v1h-1z M471,323h1v1h-1z M269,164h7v1h-7z M69,202h1v1h-1z M372,99h1v1h-1z M272,136h1v1h-1z M232,155h1v1h-1z M202,108h1v1h-1z M26,127h1v1h-1z M412,384h1v1h-1z M451,295h1v1h-1z M453,202h1v1h-1z M467,202h1v1h-1z M272,200h1v1h-1z M24,305h1v1h-1z M332,386h1v1h-1z M511,17h1v1h-1z M511,386h1v1h-1z M163,61h1v1h-1z M123,80h1v1h-1z M372,267h1v1h-1z M322,33h1v1h-1z M212,295h1v1h-1z M305,202h1v1h-1z M422,386h1v1h-1z M24,352h1v1h-1z M471,127h1v1h-1z M272,224h1v1h-1z M24,24h1v1h-1z M422,164h1v1h-1z M26,136h1v1h-1z M103,155h1v1h-1z M422,305h1v1h-1z M372,71h1v1h-1z M242,61h1v1h-1z M24,192h1v1h-1z M183,15h1v1h-1z M153,342h1v1h-1z M123,295h1v1h-1z M139,202h1v1h-1z M362,384h1v1h-1z M175,202h1v1h-1z M272,50h1v1h-1z M73,202h1v1h-1z M372,239h1v1h-1z M471,342h1v1h-1z M73,80h1v1h-1z M109,202h1v1h-1z M457,202h1v1h-1z M143,17h1v1h-1z M501,384h1v1h-1z M272,155h1v1h-1z M222,33h1v1h-1z M24,239h1v1h-1z M269,61h7v1h-7z M222,174h1v1h-1z M173,333h1v1h-1z M73,370h1v1h-1z M153,61h1v1h-1z M272,74h1v1h-1z M372,286h1v1h-1z M272,138h1v1h-1z M143,249h1v1h-1z M471,61h1v1h-1z M269,258h7v1h-7z M471,24h1v1h-1z M272,306h1v1h-1z M312,342h1v1h-1z M282,295h1v1h-1z M401,202h1v1h-1z M73,380h1v1h-1z M322,361h1v1h-1z M272,42h1v1h-1z M217,202h1v1h-1z M173,15h1v1h-1z M292,249h1v1h-1z M73,52h1v1h-1z M272,226h1v1h-1z M173,384h1v1h-1z M173,220h1v1h-1z M24,211h1v1h-1z M272,40h1v1h-1z" fill="#7a7870"/>
</g>
<defs><filter id="heat" x="0" y="0" width="637" height="427" filterUnits="userSpaceOnUse" color-interpolation-filters="sRGB"><feTurbulence type="fractalNoise" baseFrequency="0.8" numOctaves="1" seed="5" result="t"/><feDisplacementMap in="SourceGraphic" in2="t" scale="4" xChannelSelector="R" yChannelSelector="G" result="d"/><feGaussianBlur in="d" stdDeviation="0.6" result="b"/><feTurbulence type="fractalNoise" baseFrequency="0.6" numOctaves="2" seed="11" result="n0"/><feColorMatrix in="n0" type="matrix" values="1 0 0 0 0  1 0 0 0 0  1 0 0 0 0  0 0 0 0 1" result="n"/><feComposite in="b" in2="n" operator="arithmetic" k1="0.1" k2="0.95" k3="0.16" k4="-0.08" result="c"/><feColorMatrix in="c" type="matrix" values="1 0 0 0 0  0 1 0 0 0  0 0 1 0 0  1 0 0 0 0" result="ca"/><feComponentTransfer in="ca"><feFuncR type="table" tableValues="0.000 0.000 0.000 0.000 0.000 0.000 0.000 0.000 0.000 0.000 0.000 0.000 0.000 0.000 0.000 0.052 0.139 0.227 0.314 0.394 0.474 0.554 0.635 0.712 0.789 0.865 0.941 0.956 0.971 0.985 1.000 1.000 1.000 1.000 1.000 1.000 0.990 0.978 0.966 0.953 0.941"/><feFuncG type="table" tableValues="0.000 0.000 0.000 0.000 0.039 0.137 0.235 0.328 0.418 0.508 0.598 0.688 0.765 0.838 0.912 0.951 0.967 0.984 1.000 1.000 1.000 1.000 1.000 0.990 0.974 0.958 0.941 0.853 0.765 0.676 0.588 0.539 0.490 0.441 0.392 0.343 0.301 0.260 0.219 0.178 0.137"/><feFuncB type="table" tableValues="0.000 0.000 0.000 0.412 0.849 0.912 0.975 1.000 1.000 1.000 1.000 1.000 0.946 0.879 0.811 0.719 0.610 0.501 0.392 0.330 0.267 0.205 0.143 0.098 0.065 0.033 0.000 0.000 0.000 0.000 0.000 0.000 0.000 0.000 0.000 0.000 0.000 0.000 0.000 0.000 0.000"/><feFuncA type="linear" slope="30" intercept="-1.8"/></feComponentTransfer></filter>
<clipPath id="gc"><rect x="24" y="15" width="497" height="373"/></clipPath></defs>
<g clip-path="url(#gc)"><g filter="url(#heat)">
<rect x="0" y="0" width="637" height="427" fill="#000"/>
<rect x="17" y="80.45" width="510" height="19.5" fill="#161616"/><rect x="17" y="82.45" width="510" height="15.5" fill="#474747"/><rect x="17" y="83.20" width="510" height="14" fill="#7a7a7a"/><rect x="17" y="85.20" width="510" height="10" fill="#9e9e9e"/><rect x="17" y="86.45" width="510" height="7.5" fill="#c4c4c4"/><rect x="2.7" y="87.7" width="7.7" height="5.8" rx="2" fill="#e8e8e8"/><rect x="17.8" y="87.8" width="9.5" height="5.2" rx="2" fill="#f9f9f9"/><rect x="34.8" y="88.4" width="7.5" height="4.5" rx="2" fill="#eeeeee"/><rect x="49.1" y="87.9" width="10.8" height="4.5" rx="2" fill="#f6f6f6"/><rect x="66.4" y="87.8" width="8.1" height="5.9" rx="2" fill="#e1e1e1"/><rect x="82.9" y="88.2" width="7.1" height="5.3" rx="2" fill="#ececec"/><rect x="98.5" y="87.0" width="8.1" height="5.1" rx="2" fill="#e7e7e7"/><rect x="113.9" y="87.2" width="9.2" height="5.2" rx="2" fill="#e7e7e7"/><rect x="130.5" y="87.3" width="8.1" height="5.2" rx="2" fill="#e1e1e1"/><rect x="144.9" y="87.7" width="11.2" height="5.3" rx="2" fill="#e6e6e6"/><rect x="160.5" y="86.8" width="12.0" height="5.8" rx="2" fill="#ebebeb"/><rect x="177.2" y="88.0" width="10.6" height="5.6" rx="2" fill="#ededed"/><rect x="192.9" y="87.2" width="11.2" height="5.5" rx="2" fill="#f2f2f2"/><rect x="208.8" y="87.3" width="11.4" height="5.8" rx="2" fill="#f2f2f2"/><rect x="226.9" y="88.2" width="7.2" height="4.9" rx="2" fill="#ededed"/><rect x="242.6" y="87.8" width="7.9" height="5.3" rx="2" fill="#f5f5f5"/><rect x="258.1" y="87.6" width="8.9" height="5.2" rx="2" fill="#f8f8f8"/><rect x="273.7" y="87.6" width="9.6" height="5.1" rx="2" fill="#e1e1e1"/><rect x="290.9" y="88.1" width="7.2" height="5.6" rx="2" fill="#f3f3f3"/><rect x="306.0" y="87.8" width="9.0" height="4.8" rx="2" fill="#fefefe"/><rect x="321.1" y="88.0" width="10.9" height="5.3" rx="2" fill="#e8e8e8"/><rect x="337.7" y="87.3" width="9.6" height="5.9" rx="2" fill="#eeeeee"/><rect x="354.3" y="88.2" width="8.3" height="5.3" rx="2" fill="#e1e1e1"/><rect x="369.0" y="87.9" width="10.9" height="5.7" rx="2" fill="#f7f7f7"/><rect x="385.0" y="87.6" width="11.0" height="5.3" rx="2" fill="#ededed"/><rect x="402.9" y="87.4" width="7.3" height="5.8" rx="2" fill="#e7e7e7"/><rect x="417.7" y="87.4" width="9.5" height="5.2" rx="2" fill="#ebebeb"/><rect x="433.7" y="87.6" width="9.7" height="5.4" rx="2" fill="#eeeeee"/><rect x="450.9" y="87.3" width="7.1" height="4.8" rx="2" fill="#f2f2f2"/><rect x="464.8" y="87.8" width="11.3" height="5.7" rx="2" fill="#f9f9f9"/><rect x="482.4" y="87.6" width="8.3" height="5.8" rx="2" fill="#e3e3e3"/><rect x="499.0" y="88.3" width="7.1" height="4.5" rx="2" fill="#e8e8e8"/><rect x="514.7" y="87.3" width="7.5" height="5.4" rx="2" fill="#e3e3e3"/>
<rect x="17" y="301.75" width="510" height="19.5" fill="#161616"/><rect x="17" y="303.75" width="510" height="15.5" fill="#474747"/><rect x="17" y="304.50" width="510" height="14" fill="#7a7a7a"/><rect x="17" y="306.50" width="510" height="10" fill="#9e9e9e"/><rect x="17" y="307.75" width="510" height="7.5" fill="#c4c4c4"/><rect x="0.6" y="307.9" width="11.8" height="5.9" rx="2" fill="#e3e3e3"/><rect x="16.9" y="308.9" width="11.2" height="5.6" rx="2" fill="#eaeaea"/><rect x="33.5" y="308.9" width="10.0" height="5.4" rx="2" fill="#e5e5e5"/><rect x="49.9" y="309.3" width="9.2" height="5.1" rx="2" fill="#ffffff"/><rect x="64.6" y="308.8" width="11.7" height="5.3" rx="2" fill="#e9e9e9"/><rect x="82.9" y="309.2" width="7.2" height="4.5" rx="2" fill="#eaeaea"/><rect x="98.0" y="308.6" width="8.9" height="5.8" rx="2" fill="#f2f2f2"/><rect x="114.4" y="309.0" width="8.2" height="4.5" rx="2" fill="#e5e5e5"/><rect x="129.7" y="308.7" width="9.6" height="6.0" rx="2" fill="#e6e6e6"/><rect x="144.8" y="309.0" width="11.5" height="5.7" rx="2" fill="#fcfcfc"/><rect x="161.1" y="308.5" width="10.8" height="5.7" rx="2" fill="#fefefe"/><rect x="176.6" y="309.5" width="11.8" height="4.7" rx="2" fill="#f6f6f6"/><rect x="193.8" y="308.8" width="9.3" height="5.3" rx="2" fill="#fdfdfd"/><rect x="209.7" y="308.4" width="9.5" height="5.7" rx="2" fill="#fbfbfb"/><rect x="224.8" y="309.0" width="11.5" height="5.2" rx="2" fill="#fdfdfd"/><rect x="241.2" y="308.5" width="10.6" height="5.2" rx="2" fill="#eaeaea"/><rect x="257.3" y="309.7" width="10.5" height="4.7" rx="2" fill="#e9e9e9"/><rect x="272.7" y="309.7" width="11.6" height="5.0" rx="2" fill="#f6f6f6"/><rect x="289.7" y="309.1" width="9.5" height="5.3" rx="2" fill="#f2f2f2"/><rect x="306.2" y="309.1" width="8.6" height="4.8" rx="2" fill="#fdfdfd"/><rect x="321.4" y="309.6" width="10.1" height="4.6" rx="2" fill="#f7f7f7"/><rect x="336.7" y="309.4" width="11.5" height="4.8" rx="2" fill="#e2e2e2"/><rect x="353.4" y="308.7" width="10.3" height="4.9" rx="2" fill="#fbfbfb"/><rect x="370.7" y="309.4" width="7.5" height="5.3" rx="2" fill="#e8e8e8"/><rect x="386.5" y="308.5" width="8.1" height="5.8" rx="2" fill="#f6f6f6"/><rect x="402.9" y="308.5" width="7.2" height="5.0" rx="2" fill="#f5f5f5"/><rect x="418.8" y="307.9" width="7.4" height="5.9" rx="2" fill="#f7f7f7"/><rect x="434.9" y="309.5" width="7.1" height="4.9" rx="2" fill="#e5e5e5"/><rect x="450.5" y="308.6" width="7.9" height="5.5" rx="2" fill="#e2e2e2"/><rect x="464.5" y="308.5" width="12.0" height="4.7" rx="2" fill="#ebebeb"/><rect x="481.5" y="308.2" width="10.1" height="5.6" rx="2" fill="#ebebeb"/><rect x="498.9" y="309.3" width="7.2" height="5.2" rx="2" fill="#f7f7f7"/><rect x="512.7" y="309.2" width="11.5" height="5.6" rx="2" fill="#f6f6f6"/>
<g style="mix-blend-mode:lighten"><path d="M136.4,92.8 L137.4,94.4 L138.9,96.8 L140.5,99.5 L141.9,102.1 L143.0,104.1 L144.1,106.7 L144.6,109.4 L145.0,111.9 L145.4,114.9 L145.8,118.1 L146.2,121.3 L146.7,123.8 L147.1,125.9 L147.5,128.6 L148.0,133.2 L148.1,134.9 L148.2,137.0 L148.3,139.2 L148.4,141.5 L148.5,144.0 L148.6,146.7 L148.7,149.4 L148.9,152.1 L149.0,154.9 L149.1,157.7 L149.2,160.4 L149.3,163.1 L149.4,165.7 L149.5,168.1 L149.6,170.9 L149.7,173.8 L149.9,176.7 L150.0,179.6 L150.1,182.5 L150.2,185.4 L150.3,188.1 L150.4,190.8 L150.6,193.4 L150.7,195.8 L150.8,198.1 L151.0,200.2 L151.4,203.8 L151.8,206.7 L152.2,209.1 L152.7,211.2 L153.1,213.2 L153.5,215.4 L153.9,217.8 L154.3,220.0 L154.7,222.2 L155.1,224.6 L155.6,227.3 L156.0,230.4 L156.3,232.6 L156.7,235.1 L157.0,237.8 L157.4,240.6 L157.8,243.5 L158.2,246.4 L158.5,249.2 L158.9,251.9 L159.2,254.4 L159.5,256.5 L160.1,260.1 L160.7,263.0 L161.3,265.5 L161.8,267.8 L162.2,270.0 L162.7,273.2 L163.1,276.1 L163.9,278.9 L165.3,281.7 L167.0,284.4 L168.8,286.9 L170.6,289.3 L172.9,291.8 L175.5,294.3 L178.0,296.3 L180.4,298.1 L182.8,299.8 L184.8,301.4 L186.6,303.0 L188.5,304.8 L190.6,306.9 L193.2,309.0 L195.8,310.7 L198.6,312.3 L201.3,313.8 L203.5,315.0 L205.1,315.9 L210.9,304.1 L209.3,303.4 L206.9,302.4 L204.3,301.2 L201.9,300.0 L200.0,299.0 L198.1,297.8 L196.3,296.3 L194.4,294.6 L192.2,292.6 L189.8,290.7 L187.5,288.9 L185.5,287.2 L183.9,285.7 L182.0,283.6 L180.4,281.4 L178.6,279.1 L176.7,276.9 L174.8,274.9 L173.1,273.1 L171.4,271.7 L169.9,270.3 L168.4,268.0 L167.7,266.2 L167.2,264.2 L166.7,261.8 L166.1,259.0 L165.5,255.5 L165.1,253.4 L164.6,251.0 L164.2,248.4 L163.7,245.6 L163.2,242.7 L162.7,239.8 L162.2,237.0 L161.8,234.3 L161.3,231.8 L161.0,229.6 L160.4,226.5 L160.0,223.8 L159.6,221.4 L159.2,219.2 L158.9,217.0 L158.5,214.6 L158.0,212.2 L157.6,210.1 L157.1,208.1 L156.7,205.9 L156.3,203.2 L156.0,199.8 L155.8,197.8 L155.7,195.5 L155.6,193.1 L155.4,190.6 L155.3,187.9 L155.2,185.1 L155.1,182.3 L155.0,179.4 L154.9,176.5 L154.8,173.6 L154.6,170.7 L154.5,167.9 L154.4,165.4 L154.2,162.8 L154.1,160.2 L153.9,157.4 L153.8,154.7 L153.6,151.9 L153.5,149.1 L153.3,146.4 L153.1,143.8 L153.0,141.3 L152.8,138.9 L152.7,136.7 L152.6,134.7 L152.4,132.8 L152.1,128.1 L151.7,125.2 L151.5,123.1 L151.2,120.7 L150.9,117.6 L150.6,114.3 L150.3,111.2 L150.0,108.6 L149.6,105.3 L148.6,101.9 L147.7,99.5 L146.6,96.6 L145.4,93.6 L144.3,91.0 L143.6,89.2Z" fill="#1a1a1a"/><path d="M137.1,92.5 L138.0,94.1 L139.4,96.6 L141.0,99.3 L142.5,101.9 L143.5,103.9 L144.6,106.6 L145.1,109.3 L145.5,111.9 L145.9,114.9 L146.3,118.1 L146.7,121.3 L147.1,123.8 L147.5,125.8 L147.9,128.6 L148.4,133.1 L148.5,134.9 L148.6,136.9 L148.7,139.1 L148.8,141.5 L148.9,144.0 L149.1,146.6 L149.2,149.3 L149.3,152.1 L149.4,154.9 L149.5,157.6 L149.6,160.4 L149.7,163.1 L149.8,165.6 L150.0,168.1 L150.1,170.9 L150.2,173.8 L150.3,176.7 L150.4,179.6 L150.5,182.5 L150.6,185.3 L150.8,188.1 L150.9,190.8 L151.0,193.4 L151.1,195.8 L151.3,198.1 L151.5,200.2 L151.8,203.7 L152.2,206.6 L152.7,209.0 L153.1,211.1 L153.6,213.1 L154.0,215.4 L154.4,217.7 L154.8,219.9 L155.2,222.2 L155.6,224.5 L156.0,227.2 L156.5,230.3 L156.8,232.5 L157.1,235.0 L157.5,237.7 L157.9,240.6 L158.3,243.5 L158.6,246.4 L159.0,249.2 L159.4,251.8 L159.7,254.3 L160.1,256.4 L160.7,260.0 L161.3,262.9 L161.8,265.4 L162.3,267.6 L162.8,269.8 L163.3,273.0 L163.9,275.7 L164.7,278.4 L166.2,281.1 L167.9,283.8 L169.7,286.2 L171.5,288.6 L173.7,291.0 L176.3,293.6 L178.6,295.5 L181.1,297.3 L183.4,299.0 L185.5,300.6 L187.3,302.2 L189.2,304.1 L191.3,306.1 L193.8,308.1 L196.4,309.7 L199.1,311.3 L201.8,312.8 L204.0,314.0 L205.6,314.8 L210.4,305.2 L208.8,304.4 L206.4,303.4 L203.8,302.2 L201.3,301.0 L199.4,299.9 L197.4,298.6 L195.6,297.1 L193.7,295.3 L191.5,293.4 L189.2,291.5 L186.9,289.7 L184.8,288.0 L183.1,286.4 L181.2,284.3 L179.6,282.1 L177.7,279.8 L175.8,277.6 L174.0,275.6 L172.3,273.6 L170.7,272.1 L169.2,270.6 L167.8,268.2 L167.2,266.3 L166.6,264.3 L166.1,261.9 L165.6,259.1 L164.9,255.6 L164.5,253.5 L164.1,251.1 L163.7,248.5 L163.2,245.7 L162.7,242.8 L162.2,239.9 L161.8,237.1 L161.3,234.4 L160.9,231.9 L160.5,229.7 L160.0,226.5 L159.5,223.9 L159.2,221.5 L158.8,219.3 L158.4,217.0 L158.0,214.6 L157.6,212.3 L157.1,210.2 L156.7,208.2 L156.3,205.9 L155.9,203.2 L155.5,199.8 L155.4,197.8 L155.2,195.6 L155.1,193.2 L155.0,190.6 L154.9,187.9 L154.8,185.2 L154.7,182.3 L154.5,179.4 L154.4,176.5 L154.3,173.6 L154.2,170.7 L154.0,167.9 L153.9,165.4 L153.8,162.9 L153.6,160.2 L153.5,157.5 L153.3,154.7 L153.2,151.9 L153.0,149.2 L152.9,146.5 L152.7,143.8 L152.6,141.3 L152.4,138.9 L152.3,136.7 L152.2,134.7 L152.0,132.9 L151.7,128.2 L151.3,125.3 L151.0,123.1 L150.7,120.7 L150.4,117.6 L150.1,114.4 L149.8,111.3 L149.5,108.7 L149.1,105.4 L148.1,102.1 L147.2,99.7 L146.0,96.8 L144.8,93.9 L143.7,91.3 L142.9,89.5Z" fill="#474747"/><path d="M137.6,92.2 L138.6,93.8 L140.1,96.2 L141.7,98.9 L143.3,101.5 L144.4,103.6 L145.5,106.3 L146.0,109.2 L146.5,111.7 L146.9,114.7 L147.3,118.0 L147.7,121.1 L148.1,123.6 L148.5,125.7 L148.9,128.5 L149.3,133.1 L149.4,134.9 L149.5,136.9 L149.6,139.1 L149.8,141.5 L149.9,144.0 L150.0,146.6 L150.1,149.3 L150.3,152.0 L150.4,154.8 L150.5,157.6 L150.6,160.3 L150.7,163.0 L150.9,165.6 L151.0,168.0 L151.1,170.9 L151.2,173.7 L151.3,176.7 L151.4,179.6 L151.5,182.4 L151.6,185.3 L151.7,188.1 L151.8,190.8 L152.0,193.3 L152.1,195.8 L152.2,198.0 L152.4,200.1 L152.7,203.6 L153.0,206.5 L153.4,208.8 L153.7,210.9 L154.1,213.0 L154.5,215.3 L154.9,217.6 L155.2,219.9 L155.6,222.1 L156.0,224.4 L156.4,227.1 L156.9,230.3 L157.2,232.5 L157.5,235.0 L157.9,237.7 L158.3,240.5 L158.7,243.4 L159.1,246.3 L159.5,249.1 L159.9,251.8 L160.2,254.2 L160.5,256.3 L161.2,259.9 L161.7,262.8 L162.3,265.3 L162.8,267.5 L163.3,269.7 L163.9,272.7 L164.5,275.3 L165.5,277.9 L166.9,280.6 L168.6,283.2 L170.4,285.6 L172.3,287.9 L174.4,290.4 L177.0,292.9 L179.2,294.8 L181.6,296.5 L184.0,298.2 L186.1,299.9 L187.9,301.6 L189.8,303.4 L191.9,305.3 L194.4,307.3 L196.9,308.9 L199.6,310.4 L202.2,311.9 L204.5,313.1 L206.1,313.9 L209.9,306.1 L208.3,305.3 L206.0,304.3 L203.4,303.1 L200.8,301.9 L198.8,300.7 L196.8,299.3 L195.0,297.7 L193.1,296.0 L190.9,294.1 L188.6,292.3 L186.3,290.5 L184.2,288.7 L182.4,287.1 L180.5,285.0 L178.8,282.7 L177.0,280.4 L175.0,278.2 L173.2,276.1 L171.5,274.1 L170.0,272.4 L168.6,270.8 L167.3,268.3 L166.7,266.5 L166.2,264.4 L165.6,262.0 L165.1,259.2 L164.5,255.7 L164.1,253.6 L163.7,251.2 L163.2,248.5 L162.7,245.7 L162.3,242.9 L161.8,240.0 L161.3,237.1 L160.9,234.4 L160.5,232.0 L160.1,229.7 L159.6,226.6 L159.1,223.9 L158.7,221.5 L158.3,219.3 L157.9,217.1 L157.5,214.7 L157.0,212.4 L156.5,210.3 L156.0,208.3 L155.5,206.1 L155.1,203.3 L154.6,199.9 L154.5,197.9 L154.3,195.6 L154.2,193.2 L154.0,190.7 L153.9,188.0 L153.8,185.2 L153.7,182.4 L153.5,179.5 L153.4,176.6 L153.3,173.7 L153.2,170.8 L153.0,168.0 L152.9,165.5 L152.8,162.9 L152.6,160.2 L152.5,157.5 L152.4,154.7 L152.2,152.0 L152.1,149.2 L151.9,146.5 L151.8,143.9 L151.6,141.4 L151.5,139.0 L151.4,136.8 L151.2,134.7 L151.1,132.9 L150.7,128.3 L150.4,125.4 L150.0,123.3 L149.7,120.9 L149.4,117.7 L149.1,114.5 L148.9,111.4 L148.6,108.8 L148.1,105.7 L147.2,102.4 L146.4,100.1 L145.3,97.2 L144.1,94.2 L143.1,91.6 L142.4,89.8Z" fill="#7a7a7a"/><path d="M139.8,91.1 L140.7,92.8 L142.0,95.3 L143.4,98.1 L144.8,100.8 L145.8,103.0 L146.8,106.0 L147.3,109.0 L147.6,111.6 L148.0,114.6 L148.3,117.9 L148.7,121.0 L149.0,123.5 L149.4,125.6 L149.8,128.4 L150.2,133.0 L150.3,134.8 L150.4,136.8 L150.5,139.0 L150.7,141.4 L150.8,143.9 L150.9,146.6 L151.1,149.3 L151.2,152.0 L151.3,154.8 L151.4,157.6 L151.6,160.3 L151.7,163.0 L151.8,165.5 L152.0,168.0 L152.1,170.8 L152.2,173.7 L152.3,176.6 L152.4,179.5 L152.5,182.4 L152.7,185.3 L152.8,188.0 L152.9,190.7 L153.0,193.3 L153.1,195.7 L153.3,197.9 L153.5,200.0 L153.8,203.5 L154.2,206.3 L154.6,208.6 L155.1,210.6 L155.5,212.7 L156.0,215.0 L156.4,217.4 L156.7,219.6 L157.1,221.8 L157.5,224.2 L157.9,226.9 L158.5,230.0 L158.8,232.2 L159.2,234.7 L159.6,237.4 L160.0,240.2 L160.4,243.1 L160.9,246.0 L161.3,248.8 L161.7,251.5 L162.1,253.9 L162.4,256.0 L163.0,259.6 L163.5,262.5 L164.0,264.9 L164.5,267.1 L165.0,269.1 L165.8,272.0 L166.6,274.3 L167.6,276.5 L169.0,279.1 L170.7,281.6 L172.5,284.0 L174.3,286.3 L176.3,288.7 L178.7,291.1 L180.8,292.9 L183.1,294.7 L185.4,296.4 L187.6,298.1 L189.5,299.9 L191.3,301.7 L193.3,303.6 L195.6,305.4 L198.0,306.9 L200.6,308.4 L203.2,309.8 L205.5,311.0 L207.1,311.9 L208.9,308.1 L207.3,307.4 L205.0,306.3 L202.3,305.1 L199.7,303.8 L197.6,302.6 L195.4,301.1 L193.4,299.4 L191.5,297.7 L189.4,295.9 L187.2,294.1 L184.9,292.3 L182.7,290.6 L180.7,288.9 L178.6,286.6 L176.8,284.3 L174.9,282.0 L173.0,279.8 L171.1,277.6 L169.4,275.5 L168.0,273.5 L166.7,271.6 L165.6,268.9 L165.0,266.9 L164.4,264.8 L163.8,262.4 L163.2,259.5 L162.6,256.0 L162.2,253.9 L161.8,251.4 L161.4,248.8 L161.0,246.0 L160.5,243.1 L160.1,240.2 L159.7,237.4 L159.3,234.7 L158.9,232.2 L158.5,230.0 L158.0,226.9 L157.6,224.2 L157.2,221.8 L156.8,219.6 L156.4,217.4 L156.0,215.0 L155.6,212.7 L155.2,210.6 L154.7,208.6 L154.3,206.3 L153.9,203.5 L153.5,200.0 L153.4,197.9 L153.2,195.7 L153.1,193.3 L153.0,190.7 L152.9,188.0 L152.8,185.2 L152.6,182.4 L152.5,179.5 L152.4,176.6 L152.3,173.7 L152.2,170.8 L152.0,168.0 L151.9,165.5 L151.8,163.0 L151.7,160.3 L151.5,157.5 L151.4,154.8 L151.3,152.0 L151.1,149.2 L151.0,146.5 L150.9,143.9 L150.8,141.4 L150.6,139.0 L150.5,136.8 L150.4,134.8 L150.2,133.0 L149.9,128.4 L149.5,125.6 L149.1,123.5 L148.7,121.0 L148.4,117.9 L148.0,114.6 L147.7,111.6 L147.3,109.0 L146.9,106.0 L145.8,103.0 L144.9,100.8 L143.6,98.0 L142.2,95.2 L141.0,92.6 L140.2,90.9Z" fill="#9e9e9e"/><path d="M139.9,91.1 L140.8,92.8 L142.0,95.3 L143.5,98.1 L144.8,100.8 L145.8,103.0 L146.8,106.0 L147.3,109.0 L147.6,111.6 L148.0,114.6 L148.3,117.9 L148.7,121.0 L149.0,123.5 L149.4,125.6 L149.8,128.4 L150.2,133.0 L150.3,134.8 L150.4,136.8 L150.5,139.0 L150.7,141.4 L150.8,143.9 L150.9,146.6 L151.1,149.3 L151.2,152.0 L151.3,154.8 L151.4,157.6 L151.6,160.3 L151.7,163.0 L151.8,165.5 L152.0,168.0 L152.1,170.8 L152.2,173.7 L152.3,176.6 L152.4,179.5 L152.5,182.4 L152.7,185.3 L152.8,188.0 L152.9,190.7 L153.0,193.3 L153.1,195.7 L153.3,197.9 L153.5,200.0 L153.8,203.5 L154.2,206.3 L154.6,208.6 L155.1,210.6 L155.5,212.7 L156.0,215.0 L156.4,217.4 L156.7,219.6 L157.1,221.8 L157.5,224.2 L157.9,226.9 L158.5,230.0 L158.8,232.2 L159.2,234.7 L159.6,237.4 L160.0,240.2 L160.4,243.1 L160.9,246.0 L161.3,248.8 L161.7,251.5 L162.1,253.9 L162.5,256.0 L163.1,259.5 L163.6,262.4 L164.1,264.9 L164.6,267.0 L165.1,269.0 L166.0,271.9 L166.9,274.1 L168.0,276.3 L169.5,278.7 L171.2,281.1 L173.0,283.5 L174.9,285.9 L176.9,288.2 L179.2,290.6 L181.2,292.4 L183.5,294.1 L185.8,295.8 L188.0,297.6 L190.0,299.3 L191.8,301.2 L193.8,303.0 L196.1,304.7 L198.4,306.2 L201.0,307.6 L203.6,309.0 L205.9,310.2 L207.5,311.0 L208.5,309.0 L206.9,308.2 L204.6,307.2 L201.9,305.9 L199.3,304.6 L197.1,303.3 L194.9,301.7 L192.9,300.0 L191.0,298.2 L189.0,296.4 L186.7,294.7 L184.4,292.9 L182.2,291.1 L180.2,289.4 L178.1,287.1 L176.2,284.8 L174.4,282.5 L172.4,280.2 L170.6,278.0 L169.0,275.7 L167.6,273.7 L166.5,271.7 L165.5,269.0 L164.9,267.0 L164.3,264.8 L163.8,262.4 L163.2,259.5 L162.5,256.0 L162.2,253.9 L161.8,251.4 L161.4,248.8 L161.0,246.0 L160.5,243.1 L160.1,240.2 L159.7,237.4 L159.3,234.7 L158.9,232.2 L158.5,230.0 L158.0,226.9 L157.6,224.2 L157.2,221.8 L156.8,219.6 L156.4,217.4 L156.0,215.0 L155.6,212.7 L155.2,210.6 L154.7,208.6 L154.3,206.3 L153.9,203.5 L153.5,200.0 L153.4,197.9 L153.2,195.7 L153.1,193.3 L153.0,190.7 L152.9,188.0 L152.8,185.2 L152.6,182.4 L152.5,179.5 L152.4,176.6 L152.3,173.7 L152.2,170.8 L152.0,168.0 L151.9,165.5 L151.8,163.0 L151.7,160.3 L151.5,157.5 L151.4,154.8 L151.3,152.0 L151.1,149.2 L151.0,146.5 L150.9,143.9 L150.8,141.4 L150.6,139.0 L150.5,136.8 L150.4,134.8 L150.2,133.0 L149.9,128.4 L149.5,125.6 L149.1,123.5 L148.7,121.0 L148.4,117.9 L148.0,114.6 L147.7,111.6 L147.3,109.0 L146.9,106.0 L145.8,103.0 L144.9,100.8 L143.6,98.0 L142.2,95.2 L141.0,92.7 L140.1,90.9Z" fill="#bdbdbd"/></g>
<g style="mix-blend-mode:lighten"><path d="M271.2,92.3 L272.4,94.5 L273.9,97.9 L274.5,99.9 L275.2,102.1 L275.9,104.6 L276.6,107.6 L277.0,109.8 L277.5,112.4 L278.0,115.1 L278.4,117.9 L278.8,120.7 L279.1,123.4 L279.4,126.0 L279.6,128.6 L279.7,131.2 L279.9,133.9 L279.9,136.5 L280.0,139.2 L280.0,142.0 L280.0,144.8 L279.9,147.8 L279.8,150.7 L279.7,153.5 L279.8,156.2 L279.8,159.1 L280.0,161.8 L280.1,164.3 L280.3,166.8 L280.5,169.4 L280.7,172.1 L280.9,174.9 L281.2,177.8 L281.5,180.7 L282.0,183.7 L282.5,186.5 L283.3,189.1 L284.0,191.6 L284.7,194.3 L285.3,197.5 L285.5,199.4 L285.8,201.6 L286.0,204.0 L286.2,206.5 L286.4,209.2 L286.6,211.9 L286.9,214.7 L287.2,217.5 L287.5,220.3 L287.9,223.0 L288.4,225.8 L288.9,228.7 L289.4,231.7 L290.0,234.6 L290.5,237.5 L291.0,240.3 L291.5,242.9 L291.9,245.3 L292.3,247.5 L292.8,251.1 L293.2,254.1 L293.4,256.5 L293.6,258.7 L293.9,260.7 L294.5,264.3 L295.2,267.1 L296.1,270.3 L297.2,273.8 L298.3,277.6 L299.6,281.4 L301.1,283.8 L302.6,286.1 L304.2,288.2 L305.8,290.3 L307.7,292.4 L309.8,294.6 L312.2,296.8 L314.5,298.7 L316.5,300.4 L318.2,302.2 L320.2,304.2 L322.6,306.5 L325.2,308.5 L328.1,310.5 L331.4,312.4 L334.5,313.9 L337.9,315.3 L340.9,316.4 L342.9,317.3 L347.1,304.7 L345.0,304.2 L342.0,303.4 L339.0,302.5 L336.6,301.6 L334.3,300.4 L332.4,299.0 L330.6,297.5 L329.1,295.9 L327.5,293.9 L325.5,291.6 L323.2,289.3 L321.0,287.2 L319.2,285.4 L317.6,283.6 L316.0,281.7 L314.4,279.8 L312.7,277.9 L311.1,276.2 L309.6,274.6 L307.0,272.4 L304.8,270.2 L303.4,267.7 L302.4,264.9 L301.6,262.6 L300.7,259.3 L300.2,257.4 L299.7,255.4 L299.1,253.0 L298.4,250.1 L297.7,246.5 L297.3,244.4 L296.9,241.9 L296.4,239.3 L295.9,236.5 L295.4,233.6 L295.0,230.7 L294.5,227.8 L294.1,224.9 L293.8,222.2 L293.5,219.7 L293.3,216.9 L293.1,214.2 L293.0,211.5 L293.0,208.9 L293.0,206.2 L292.9,203.7 L292.9,201.2 L292.9,198.9 L292.7,196.5 L292.4,193.0 L292.0,189.9 L291.6,187.3 L291.2,184.8 L290.8,182.3 L290.6,179.7 L290.3,176.9 L290.0,174.1 L289.7,171.3 L289.5,168.6 L289.2,166.0 L289.0,163.5 L288.7,161.1 L288.5,158.6 L288.2,155.8 L288.0,153.3 L287.9,150.5 L287.7,147.6 L287.5,144.6 L287.3,141.7 L287.0,138.8 L286.7,136.0 L286.4,133.3 L286.0,130.6 L285.7,128.0 L285.3,125.3 L284.9,122.6 L284.5,119.9 L284.0,117.0 L283.6,114.2 L283.1,111.4 L282.7,108.8 L282.2,106.4 L281.7,103.3 L281.1,100.7 L280.6,98.3 L280.1,96.1 L279.3,92.2 L278.8,89.7Z" fill="#1a1a1a"/><path d="M271.9,92.1 L273.0,94.3 L274.4,97.8 L275.1,99.7 L275.8,102.0 L276.4,104.5 L277.1,107.5 L277.5,109.7 L278.0,112.3 L278.5,115.0 L278.9,117.8 L279.3,120.6 L279.6,123.3 L279.9,125.9 L280.1,128.6 L280.3,131.2 L280.4,133.8 L280.6,136.5 L280.6,139.2 L280.7,141.9 L280.6,144.8 L280.6,147.7 L280.5,150.7 L280.5,153.5 L280.5,156.2 L280.6,159.1 L280.7,161.7 L280.9,164.2 L281.1,166.7 L281.3,169.3 L281.5,172.1 L281.8,174.9 L282.0,177.7 L282.3,180.6 L282.8,183.5 L283.3,186.3 L284.0,188.9 L284.7,191.4 L285.4,194.1 L285.9,197.4 L286.2,199.4 L286.4,201.6 L286.6,204.0 L286.8,206.5 L287.0,209.1 L287.2,211.8 L287.4,214.6 L287.7,217.5 L288.1,220.3 L288.4,222.9 L288.9,225.7 L289.4,228.6 L289.9,231.6 L290.5,234.5 L291.0,237.4 L291.5,240.2 L292.0,242.8 L292.4,245.2 L292.8,247.4 L293.3,251.0 L293.7,254.0 L294.0,256.4 L294.2,258.6 L294.5,260.6 L295.2,264.2 L295.9,266.9 L296.8,270.1 L297.9,273.5 L299.0,277.2 L300.5,280.8 L302.0,283.1 L303.5,285.3 L305.1,287.4 L306.8,289.5 L308.6,291.6 L310.7,293.8 L313.0,295.9 L315.3,297.9 L317.3,299.6 L319.1,301.4 L321.0,303.5 L323.3,305.7 L325.9,307.7 L328.6,309.6 L331.8,311.4 L334.9,312.8 L338.3,314.2 L341.3,315.3 L343.3,316.1 L346.7,305.9 L344.6,305.3 L341.7,304.4 L338.6,303.5 L336.2,302.6 L333.8,301.3 L331.7,299.9 L329.9,298.3 L328.3,296.7 L326.7,294.7 L324.7,292.4 L322.4,290.1 L320.2,288.1 L318.3,286.2 L316.7,284.4 L315.1,282.5 L313.5,280.6 L311.8,278.7 L310.2,276.9 L308.7,275.2 L306.2,272.8 L304.1,270.5 L302.8,267.9 L301.7,265.1 L301.0,262.7 L300.1,259.4 L299.6,257.6 L299.1,255.5 L298.5,253.1 L297.9,250.2 L297.2,246.6 L296.8,244.5 L296.4,242.0 L295.9,239.4 L295.4,236.6 L294.9,233.7 L294.5,230.8 L294.0,227.9 L293.6,225.0 L293.2,222.3 L292.9,219.7 L292.7,217.0 L292.5,214.3 L292.4,211.6 L292.4,208.9 L292.4,206.3 L292.3,203.7 L292.3,201.3 L292.2,198.9 L292.1,196.6 L291.7,193.1 L291.3,190.1 L290.8,187.4 L290.4,185.0 L290.0,182.5 L289.7,179.7 L289.5,177.0 L289.2,174.2 L288.9,171.4 L288.7,168.7 L288.4,166.1 L288.2,163.6 L287.9,161.2 L287.7,158.6 L287.5,155.8 L287.3,153.3 L287.1,150.5 L287.0,147.6 L286.8,144.7 L286.6,141.7 L286.4,138.8 L286.1,136.1 L285.8,133.4 L285.5,130.7 L285.1,128.0 L284.7,125.4 L284.4,122.7 L284.0,119.9 L283.5,117.1 L283.1,114.2 L282.6,111.5 L282.2,108.9 L281.7,106.5 L281.1,103.5 L280.6,100.8 L280.0,98.4 L279.6,96.2 L278.7,92.4 L278.1,89.9Z" fill="#474747"/><path d="M272.5,91.9 L273.8,94.1 L275.4,97.5 L276.1,99.5 L276.8,101.7 L277.4,104.3 L278.1,107.3 L278.6,109.6 L279.0,112.1 L279.5,114.8 L280.0,117.6 L280.4,120.4 L280.8,123.2 L281.2,125.8 L281.5,128.4 L281.7,131.0 L282.0,133.7 L282.2,136.4 L282.4,139.1 L282.6,141.9 L282.7,144.8 L282.8,147.7 L282.9,150.6 L283.0,153.4 L283.1,156.0 L283.3,158.9 L283.4,161.5 L283.6,164.0 L283.8,166.5 L284.0,169.1 L284.2,171.8 L284.4,174.6 L284.7,177.5 L284.9,180.3 L285.2,183.2 L285.6,185.9 L286.1,188.5 L286.6,191.0 L287.1,193.9 L287.5,197.2 L287.6,199.3 L287.7,201.5 L287.8,203.9 L287.9,206.5 L288.0,209.1 L288.1,211.8 L288.2,214.6 L288.4,217.4 L288.7,220.2 L289.0,222.9 L289.4,225.6 L289.9,228.5 L290.4,231.5 L290.9,234.4 L291.4,237.3 L292.0,240.1 L292.4,242.7 L292.9,245.2 L293.2,247.3 L293.8,250.9 L294.2,253.9 L294.5,256.3 L294.7,258.5 L295.0,260.5 L295.7,264.0 L296.4,266.7 L297.3,269.9 L298.5,273.2 L299.7,276.7 L301.3,280.2 L302.8,282.5 L304.3,284.7 L305.9,286.8 L307.6,288.8 L309.4,290.9 L311.4,293.1 L313.7,295.2 L316.0,297.1 L318.1,298.9 L319.8,300.8 L321.7,302.8 L324.0,305.0 L326.4,306.9 L329.1,308.8 L332.3,310.6 L335.3,311.9 L338.6,313.2 L341.6,314.4 L343.6,315.1 L346.4,306.9 L344.3,306.3 L341.3,305.4 L338.2,304.4 L335.7,303.4 L333.3,302.1 L331.2,300.6 L329.2,299.0 L327.6,297.3 L325.9,295.3 L323.9,293.1 L321.7,290.9 L319.5,288.8 L317.6,286.9 L315.9,285.1 L314.3,283.2 L312.7,281.2 L311.0,279.3 L309.4,277.5 L307.9,275.8 L305.5,273.3 L303.5,270.8 L302.2,268.1 L301.2,265.3 L300.4,262.9 L299.6,259.5 L299.1,257.7 L298.6,255.6 L298.1,253.2 L297.5,250.3 L296.8,246.7 L296.4,244.5 L296.0,242.1 L295.5,239.5 L295.0,236.7 L294.5,233.8 L294.0,230.9 L293.5,228.0 L293.1,225.1 L292.7,222.3 L292.3,219.8 L292.0,217.1 L291.8,214.3 L291.6,211.6 L291.4,208.9 L291.3,206.3 L291.1,203.8 L291.0,201.3 L290.8,199.0 L290.5,196.8 L290.0,193.4 L289.4,190.5 L288.7,187.9 L288.1,185.4 L287.6,182.8 L287.2,180.1 L286.8,177.2 L286.5,174.4 L286.2,171.7 L286.0,168.9 L285.7,166.3 L285.5,163.8 L285.2,161.4 L285.1,158.8 L284.9,156.0 L284.8,153.4 L284.8,150.6 L284.8,147.7 L284.8,144.7 L284.7,141.8 L284.6,138.9 L284.4,136.2 L284.2,133.5 L284.0,130.8 L283.8,128.2 L283.5,125.5 L283.2,122.8 L282.8,120.1 L282.4,117.3 L282.0,114.4 L281.6,111.7 L281.1,109.1 L280.7,106.7 L280.1,103.7 L279.6,101.0 L279.0,98.7 L278.6,96.5 L277.9,92.7 L277.5,90.1Z" fill="#7a7a7a"/><path d="M274.9,91.0 L275.8,93.4 L277.0,97.0 L277.5,99.1 L278.1,101.4 L278.7,104.0 L279.4,107.0 L279.8,109.3 L280.2,111.9 L280.7,114.6 L281.2,117.5 L281.6,120.3 L282.0,123.0 L282.3,125.7 L282.6,128.3 L282.8,130.9 L283.1,133.6 L283.3,136.3 L283.5,139.0 L283.6,141.8 L283.7,144.7 L283.7,147.7 L283.8,150.6 L283.8,153.4 L284.0,156.0 L284.1,158.8 L284.3,161.4 L284.5,163.9 L284.7,166.4 L285.0,169.0 L285.2,171.7 L285.4,174.5 L285.7,177.4 L286.0,180.2 L286.4,183.0 L286.8,185.7 L287.4,188.2 L287.9,190.8 L288.5,193.6 L289.0,197.0 L289.1,199.1 L289.3,201.4 L289.4,203.9 L289.5,206.4 L289.6,209.0 L289.8,211.7 L289.9,214.5 L290.2,217.2 L290.5,220.0 L290.8,222.6 L291.2,225.4 L291.6,228.3 L292.1,231.2 L292.7,234.1 L293.2,237.0 L293.7,239.8 L294.1,242.4 L294.6,244.9 L295.0,247.0 L295.6,250.6 L296.1,253.6 L296.5,256.0 L296.8,258.1 L297.2,260.0 L297.9,263.5 L298.6,266.1 L299.4,269.1 L300.5,272.2 L302.0,275.4 L303.7,278.6 L305.0,280.8 L306.4,283.0 L307.9,285.2 L309.4,287.3 L311.1,289.4 L313.0,291.5 L315.2,293.5 L317.5,295.5 L319.6,297.4 L321.4,299.3 L323.2,301.4 L325.3,303.4 L327.7,305.3 L330.2,307.0 L333.2,308.7 L336.1,310.0 L339.3,311.2 L342.3,312.2 L344.3,313.0 L345.7,309.0 L343.6,308.4 L340.6,307.4 L337.5,306.4 L334.8,305.3 L332.2,303.9 L329.9,302.3 L327.9,300.6 L326.0,298.8 L324.3,296.7 L322.4,294.6 L320.2,292.5 L318.0,290.5 L316.0,288.5 L314.2,286.6 L312.5,284.7 L310.7,282.8 L308.9,281.0 L307.2,279.2 L305.5,277.4 L303.3,274.6 L301.5,271.8 L300.1,268.9 L299.0,265.9 L298.2,263.4 L297.4,260.0 L297.0,258.1 L296.6,256.0 L296.2,253.5 L295.7,250.6 L295.0,247.0 L294.7,244.8 L294.2,242.4 L293.8,239.8 L293.3,237.0 L292.7,234.1 L292.2,231.2 L291.7,228.2 L291.3,225.4 L290.9,222.6 L290.5,220.0 L290.3,217.2 L290.0,214.4 L289.9,211.7 L289.7,209.0 L289.6,206.4 L289.5,203.8 L289.4,201.4 L289.2,199.1 L289.0,197.0 L288.6,193.6 L288.0,190.7 L287.5,188.2 L286.9,185.6 L286.4,183.0 L286.1,180.2 L285.8,177.3 L285.5,174.5 L285.3,171.7 L285.0,169.0 L284.8,166.4 L284.6,163.9 L284.4,161.4 L284.2,158.8 L284.0,156.0 L283.9,153.4 L283.9,150.6 L283.8,147.7 L283.8,144.7 L283.7,141.8 L283.5,139.0 L283.4,136.3 L283.2,133.6 L282.9,130.9 L282.7,128.3 L282.4,125.6 L282.0,123.0 L281.7,120.3 L281.3,117.4 L280.8,114.6 L280.3,111.9 L279.9,109.3 L279.4,107.0 L278.8,104.0 L278.2,101.4 L277.6,99.1 L277.0,97.0 L275.9,93.4 L275.1,91.0Z" fill="#9e9e9e"/><path d="M274.9,91.0 L275.8,93.4 L277.0,97.0 L277.5,99.1 L278.1,101.4 L278.7,104.0 L279.4,107.0 L279.8,109.3 L280.2,111.9 L280.7,114.6 L281.2,117.5 L281.6,120.3 L282.0,123.0 L282.3,125.7 L282.6,128.3 L282.8,130.9 L283.1,133.6 L283.3,136.3 L283.5,139.0 L283.6,141.8 L283.7,144.7 L283.7,147.7 L283.8,150.6 L283.8,153.4 L284.0,156.0 L284.1,158.8 L284.3,161.4 L284.5,163.9 L284.7,166.4 L285.0,169.0 L285.2,171.7 L285.4,174.5 L285.7,177.4 L286.0,180.2 L286.4,183.0 L286.8,185.7 L287.4,188.2 L287.9,190.8 L288.5,193.6 L289.0,197.0 L289.1,199.1 L289.3,201.4 L289.4,203.9 L289.5,206.4 L289.6,209.0 L289.8,211.7 L289.9,214.5 L290.2,217.2 L290.5,220.0 L290.8,222.6 L291.2,225.4 L291.6,228.3 L292.1,231.2 L292.7,234.1 L293.2,237.0 L293.7,239.8 L294.1,242.4 L294.6,244.9 L295.0,247.0 L295.6,250.6 L296.1,253.6 L296.5,256.0 L296.9,258.1 L297.2,260.0 L298.0,263.5 L298.7,266.0 L299.6,269.1 L300.7,272.1 L302.3,275.2 L304.1,278.3 L305.5,280.4 L307.0,282.5 L308.5,284.6 L310.1,286.7 L311.8,288.7 L313.7,290.8 L315.9,292.8 L318.1,294.8 L320.3,296.7 L322.1,298.7 L323.9,300.8 L325.9,302.7 L328.2,304.6 L330.7,306.3 L333.6,307.9 L336.4,309.1 L339.6,310.3 L342.6,311.3 L344.7,312.0 L345.3,310.0 L343.3,309.3 L340.3,308.3 L337.1,307.2 L334.4,306.1 L331.7,304.6 L329.4,303.0 L327.3,301.3 L325.4,299.4 L323.6,297.4 L321.7,295.3 L319.6,293.2 L317.3,291.2 L315.3,289.2 L313.5,287.3 L311.7,285.3 L310.1,283.4 L308.3,281.5 L306.6,279.6 L305.1,277.7 L303.0,274.8 L301.3,271.9 L299.9,268.9 L298.9,266.0 L298.1,263.4 L297.4,260.0 L297.0,258.1 L296.6,256.0 L296.2,253.5 L295.7,250.6 L295.0,247.0 L294.7,244.8 L294.2,242.4 L293.8,239.8 L293.3,237.0 L292.7,234.1 L292.2,231.2 L291.7,228.2 L291.3,225.4 L290.9,222.6 L290.5,220.0 L290.3,217.2 L290.0,214.4 L289.9,211.7 L289.7,209.0 L289.6,206.4 L289.5,203.8 L289.4,201.4 L289.2,199.1 L289.0,197.0 L288.6,193.6 L288.0,190.7 L287.5,188.2 L286.9,185.6 L286.4,183.0 L286.1,180.2 L285.8,177.3 L285.5,174.5 L285.3,171.7 L285.0,169.0 L284.8,166.4 L284.6,163.9 L284.4,161.4 L284.2,158.8 L284.0,156.0 L283.9,153.4 L283.9,150.6 L283.8,147.7 L283.8,144.7 L283.7,141.8 L283.5,139.0 L283.4,136.3 L283.2,133.6 L282.9,130.9 L282.7,128.3 L282.4,125.6 L282.0,123.0 L281.7,120.3 L281.3,117.4 L280.8,114.6 L280.3,111.9 L279.9,109.3 L279.4,107.0 L278.8,104.0 L278.2,101.4 L277.6,99.1 L277.0,97.0 L275.9,93.4 L275.1,91.0Z" fill="#bdbdbd"/></g>
<g style="mix-blend-mode:lighten"><path d="M402.5,93.0 L404.1,95.0 L406.0,98.2 L406.6,100.0 L407.2,102.2 L407.7,104.7 L408.3,107.6 L408.7,109.9 L409.1,112.4 L409.5,115.1 L410.0,117.9 L410.4,120.7 L410.8,123.5 L411.2,126.2 L411.6,128.8 L412.0,131.4 L412.4,134.1 L412.8,136.7 L413.2,139.4 L413.6,142.2 L414.0,145.1 L414.3,148.0 L414.7,150.9 L415.0,153.7 L415.3,156.2 L415.6,159.0 L415.7,161.6 L415.8,164.0 L416.0,166.5 L416.2,169.2 L416.4,171.9 L416.7,174.7 L416.9,177.5 L417.2,180.4 L417.5,183.2 L417.8,186.0 L418.1,188.8 L418.4,191.6 L418.7,194.4 L419.0,197.2 L419.2,199.7 L419.4,202.3 L419.6,204.9 L419.7,207.5 L419.9,209.9 L420.0,212.1 L420.1,214.9 L420.2,217.3 L420.3,219.7 L420.5,222.3 L420.9,225.0 L421.3,227.8 L421.8,230.5 L422.3,233.5 L422.7,236.1 L423.0,239.1 L423.4,242.1 L423.8,244.9 L424.0,247.4 L424.2,250.5 L424.3,253.1 L424.6,255.8 L425.5,259.0 L426.4,261.8 L426.8,264.1 L427.1,267.0 L427.7,270.2 L428.5,273.2 L429.5,276.1 L430.8,278.9 L432.6,281.7 L434.7,284.4 L436.9,286.9 L439.2,289.5 L441.6,291.9 L443.5,294.0 L445.1,296.0 L446.8,298.4 L448.9,300.9 L450.7,302.7 L452.6,304.5 L455.1,306.5 L458.1,308.5 L460.7,310.1 L463.6,311.6 L466.7,313.1 L469.5,314.5 L471.9,315.7 L473.6,316.5 L478.4,305.5 L476.6,304.8 L474.1,303.9 L471.3,302.8 L468.4,301.6 L465.7,300.4 L463.9,299.5 L462.0,298.0 L460.7,296.5 L459.4,294.8 L458.1,293.1 L456.4,290.9 L454.7,288.7 L452.5,286.0 L449.9,283.5 L447.4,281.2 L445.1,279.1 L443.0,277.0 L440.9,274.9 L439.2,273.1 L437.5,271.3 L436.0,269.6 L434.9,267.8 L434.2,265.7 L433.7,263.0 L433.2,260.2 L432.2,257.0 L431.4,254.2 L431.0,252.3 L430.5,249.8 L430.0,246.6 L429.6,244.1 L429.1,241.3 L428.7,238.3 L428.2,235.3 L427.7,232.5 L427.1,229.5 L426.5,226.7 L425.9,224.2 L425.5,221.7 L425.3,219.4 L425.2,217.2 L425.1,214.7 L425.0,211.9 L424.8,209.6 L424.6,207.2 L424.4,204.6 L424.2,201.9 L424.0,199.3 L423.8,196.8 L423.5,193.9 L423.2,191.1 L423.0,188.3 L422.7,185.5 L422.5,182.8 L422.3,180.0 L422.2,177.2 L422.1,174.3 L422.0,171.6 L421.8,168.8 L421.7,166.3 L421.7,163.8 L421.6,161.3 L421.5,158.6 L421.3,155.8 L421.1,153.1 L420.8,150.3 L420.6,147.3 L420.3,144.4 L420.0,141.4 L419.6,138.6 L419.3,135.8 L418.9,133.1 L418.5,130.4 L418.0,127.8 L417.6,125.2 L417.2,122.5 L416.8,119.8 L416.4,117.0 L416.0,114.1 L415.5,111.4 L415.1,108.8 L414.7,106.4 L414.0,103.3 L413.4,100.6 L412.7,98.2 L412.0,95.8 L410.6,91.8 L409.5,89.0Z" fill="#1a1a1a"/><path d="M403.1,92.6 L404.7,94.7 L406.5,98.0 L407.1,99.8 L407.7,102.0 L408.3,104.5 L408.9,107.5 L409.3,109.8 L409.7,112.3 L410.1,115.0 L410.5,117.8 L411.0,120.7 L411.4,123.4 L411.8,126.1 L412.2,128.7 L412.6,131.3 L413.0,134.0 L413.4,136.6 L413.8,139.3 L414.1,142.1 L414.5,145.0 L414.9,148.0 L415.3,150.9 L415.6,153.6 L415.8,156.2 L416.1,159.0 L416.2,161.6 L416.4,164.0 L416.5,166.5 L416.7,169.1 L416.9,171.9 L417.1,174.7 L417.4,177.5 L417.7,180.3 L418.0,183.2 L418.3,186.0 L418.6,188.8 L418.9,191.5 L419.2,194.3 L419.4,197.2 L419.6,199.7 L419.8,202.3 L420.0,204.9 L420.2,207.5 L420.3,209.9 L420.5,212.1 L420.6,214.9 L420.7,217.3 L420.8,219.7 L421.0,222.2 L421.3,225.0 L421.8,227.7 L422.3,230.4 L422.8,233.4 L423.1,236.0 L423.5,239.0 L423.9,242.0 L424.3,244.9 L424.6,247.3 L424.8,250.5 L424.9,253.1 L425.2,255.6 L426.1,258.8 L427.0,261.7 L427.4,264.0 L427.8,266.9 L428.4,269.9 L429.2,272.9 L430.2,275.7 L431.6,278.4 L433.4,281.1 L435.5,283.7 L437.6,286.2 L440.0,288.7 L442.3,291.1 L444.3,293.3 L445.9,295.3 L447.7,297.7 L449.8,300.2 L451.5,302.0 L453.4,303.8 L455.7,305.7 L458.6,307.7 L461.2,309.2 L464.1,310.7 L467.1,312.2 L469.9,313.5 L472.3,314.7 L474.0,315.5 L478.0,306.5 L476.2,305.8 L473.7,304.8 L470.9,303.7 L467.9,302.5 L465.3,301.3 L463.4,300.3 L461.4,298.8 L459.9,297.2 L458.6,295.5 L457.2,293.8 L455.5,291.6 L453.8,289.3 L451.7,286.7 L449.2,284.2 L446.7,281.9 L444.4,279.8 L442.2,277.6 L440.2,275.5 L438.4,273.6 L436.8,271.8 L435.4,270.0 L434.2,268.1 L433.5,265.8 L433.1,263.1 L432.6,260.3 L431.6,257.2 L430.8,254.4 L430.4,252.4 L430.0,249.9 L429.4,246.7 L429.0,244.2 L428.6,241.4 L428.2,238.3 L427.7,235.4 L427.2,232.6 L426.6,229.6 L426.0,226.8 L425.5,224.3 L425.0,221.8 L424.8,219.4 L424.7,217.2 L424.7,214.8 L424.5,211.9 L424.4,209.6 L424.2,207.2 L424.0,204.6 L423.8,202.0 L423.6,199.3 L423.4,196.8 L423.1,193.9 L422.8,191.1 L422.5,188.3 L422.3,185.6 L422.0,182.8 L421.9,180.0 L421.7,177.2 L421.6,174.4 L421.5,171.6 L421.3,168.9 L421.2,166.3 L421.1,163.8 L421.1,161.3 L420.9,158.7 L420.8,155.8 L420.5,153.1 L420.3,150.3 L420.0,147.4 L419.7,144.4 L419.4,141.5 L419.0,138.7 L418.7,135.9 L418.3,133.2 L417.9,130.5 L417.5,127.9 L417.0,125.2 L416.6,122.6 L416.2,119.9 L415.8,117.1 L415.4,114.2 L415.0,111.5 L414.5,108.9 L414.1,106.5 L413.5,103.4 L412.8,100.7 L412.2,98.3 L411.5,96.0 L410.0,92.0 L408.9,89.4Z" fill="#474747"/><path d="M403.7,92.3 L405.5,94.3 L407.8,97.5 L408.6,99.4 L409.3,101.6 L410.0,104.2 L410.7,107.2 L411.1,109.5 L411.5,112.0 L411.9,114.7 L412.3,117.6 L412.7,120.4 L413.2,123.1 L413.6,125.8 L414.0,128.4 L414.4,131.1 L414.8,133.7 L415.2,136.4 L415.5,139.1 L415.9,141.9 L416.2,144.8 L416.6,147.8 L416.9,150.7 L417.1,153.5 L417.4,156.1 L417.6,158.9 L417.7,161.5 L417.8,164.0 L417.8,166.4 L418.0,169.1 L418.1,171.8 L418.3,174.6 L418.5,177.4 L418.6,180.3 L418.8,183.1 L419.1,185.9 L419.3,188.7 L419.6,191.5 L419.8,194.3 L420.1,197.1 L420.2,199.6 L420.4,202.2 L420.5,204.9 L420.6,207.4 L420.7,209.9 L420.9,212.1 L421.0,214.9 L421.0,217.3 L421.1,219.7 L421.4,222.2 L421.7,224.9 L422.2,227.6 L422.7,230.3 L423.2,233.3 L423.6,236.0 L424.0,238.9 L424.4,242.0 L424.7,244.8 L425.0,247.2 L425.3,250.4 L425.4,253.0 L425.7,255.5 L426.6,258.7 L427.6,261.6 L427.9,263.9 L428.3,266.8 L428.9,269.8 L429.8,272.6 L430.9,275.3 L432.3,277.9 L434.1,280.6 L436.1,283.1 L438.3,285.6 L440.6,288.1 L443.0,290.4 L445.0,292.6 L446.7,294.8 L448.4,297.1 L450.5,299.6 L452.2,301.3 L454.0,303.1 L456.3,305.1 L459.1,307.0 L461.6,308.4 L464.4,309.9 L467.5,311.4 L470.3,312.7 L472.7,313.8 L474.4,314.6 L477.6,307.4 L475.8,306.7 L473.4,305.7 L470.5,304.5 L467.6,303.3 L464.9,302.1 L462.9,301.0 L460.8,299.4 L459.3,297.9 L457.9,296.2 L456.5,294.4 L454.7,292.2 L453.0,289.9 L451.0,287.4 L448.5,284.9 L446.0,282.6 L443.7,280.4 L441.6,278.2 L439.5,276.1 L437.7,274.1 L436.2,272.1 L434.8,270.2 L433.7,268.2 L433.0,265.9 L432.5,263.2 L432.0,260.4 L431.1,257.3 L430.3,254.5 L429.8,252.4 L429.5,250.0 L429.0,246.8 L428.6,244.3 L428.2,241.4 L427.7,238.4 L427.2,235.4 L426.8,232.7 L426.2,229.7 L425.6,226.9 L425.0,224.3 L424.6,221.8 L424.4,219.4 L424.4,217.2 L424.3,214.8 L424.1,211.9 L424.0,209.7 L423.8,207.2 L423.5,204.6 L423.3,202.0 L423.0,199.4 L422.7,196.9 L422.4,194.0 L422.1,191.2 L421.8,188.4 L421.4,185.7 L421.2,182.9 L420.9,180.1 L420.7,177.3 L420.4,174.5 L420.2,171.7 L420.0,168.9 L419.9,166.4 L419.7,163.9 L419.6,161.4 L419.5,158.8 L419.2,155.9 L419.0,153.3 L418.7,150.5 L418.3,147.6 L418.0,144.6 L417.6,141.7 L417.3,138.9 L416.9,136.2 L416.5,133.5 L416.1,130.8 L415.7,128.2 L415.3,125.5 L414.8,122.9 L414.4,120.1 L414.0,117.3 L413.6,114.5 L413.1,111.8 L412.7,109.2 L412.3,106.8 L411.8,103.8 L411.3,101.1 L410.8,98.8 L410.2,96.5 L409.2,92.5 L408.3,89.7Z" fill="#7a7a7a"/><path d="M405.9,91.1 L407.3,93.4 L409.0,97.0 L409.6,99.1 L410.2,101.4 L410.8,104.0 L411.5,107.0 L411.9,109.3 L412.3,111.9 L412.7,114.6 L413.1,117.5 L413.5,120.3 L414.0,123.0 L414.4,125.7 L414.8,128.3 L415.2,130.9 L415.6,133.6 L416.0,136.3 L416.4,139.0 L416.7,141.8 L417.1,144.7 L417.4,147.7 L417.7,150.6 L418.0,153.4 L418.3,156.0 L418.5,158.8 L418.6,161.4 L418.7,163.9 L418.8,166.4 L419.0,169.0 L419.1,171.7 L419.3,174.5 L419.5,177.4 L419.7,180.2 L420.0,183.0 L420.2,185.8 L420.5,188.6 L420.8,191.3 L421.1,194.1 L421.4,197.0 L421.6,199.5 L421.8,202.1 L422.0,204.8 L422.1,207.3 L422.3,209.8 L422.5,212.0 L422.6,214.8 L422.6,217.3 L422.7,219.6 L423.0,222.0 L423.3,224.6 L423.9,227.3 L424.4,230.0 L425.0,233.0 L425.4,235.7 L425.8,238.7 L426.2,241.7 L426.6,244.5 L427.0,247.0 L427.3,250.2 L427.6,252.7 L427.9,255.0 L428.7,258.0 L429.6,261.1 L430.0,263.6 L430.3,266.4 L430.9,269.1 L431.7,271.7 L432.7,274.2 L434.1,276.6 L435.8,279.2 L437.7,281.7 L439.8,284.1 L442.1,286.6 L444.5,289.0 L446.6,291.3 L448.3,293.5 L450.1,295.8 L452.1,298.2 L453.7,300.0 L455.4,301.8 L457.5,303.6 L460.1,305.4 L462.5,306.8 L465.3,308.2 L468.2,309.6 L471.1,310.9 L473.5,311.9 L475.2,312.7 L476.8,309.3 L475.0,308.5 L472.6,307.5 L469.7,306.3 L466.7,305.0 L464.0,303.7 L461.9,302.6 L459.6,300.9 L457.9,299.2 L456.4,297.5 L454.9,295.8 L453.1,293.5 L451.4,291.2 L449.4,288.7 L447.0,286.4 L444.5,284.1 L442.2,281.9 L439.9,279.7 L437.8,277.5 L435.9,275.4 L434.3,273.2 L432.9,271.1 L431.7,268.9 L431.0,266.3 L430.5,263.5 L430.0,260.9 L429.0,258.0 L428.1,255.0 L427.7,252.7 L427.4,250.2 L427.0,247.0 L426.7,244.5 L426.3,241.7 L425.9,238.7 L425.5,235.7 L425.0,233.0 L424.5,230.0 L424.0,227.2 L423.4,224.6 L423.0,222.0 L422.8,219.5 L422.7,217.2 L422.7,214.8 L422.5,212.0 L422.4,209.8 L422.2,207.3 L422.1,204.7 L421.9,202.1 L421.7,199.5 L421.4,197.0 L421.2,194.1 L420.9,191.3 L420.6,188.5 L420.3,185.8 L420.0,183.0 L419.8,180.2 L419.6,177.3 L419.4,174.5 L419.2,171.7 L419.0,169.0 L418.9,166.4 L418.8,163.9 L418.7,161.4 L418.6,158.8 L418.3,156.0 L418.1,153.4 L417.8,150.6 L417.5,147.7 L417.2,144.7 L416.8,141.8 L416.4,139.0 L416.1,136.3 L415.7,133.6 L415.3,130.9 L414.9,128.3 L414.5,125.6 L414.0,123.0 L413.6,120.3 L413.2,117.4 L412.8,114.6 L412.4,111.9 L412.0,109.3 L411.5,107.0 L410.9,104.0 L410.3,101.4 L409.7,99.1 L409.0,97.0 L407.4,93.3 L406.1,90.9Z" fill="#9e9e9e"/><path d="M405.9,91.0 L407.3,93.4 L409.0,97.0 L409.6,99.1 L410.2,101.4 L410.8,104.0 L411.5,107.0 L411.9,109.3 L412.3,111.9 L412.7,114.6 L413.1,117.5 L413.5,120.3 L414.0,123.0 L414.4,125.7 L414.8,128.3 L415.2,130.9 L415.6,133.6 L416.0,136.3 L416.4,139.0 L416.7,141.8 L417.1,144.7 L417.4,147.7 L417.7,150.6 L418.0,153.4 L418.3,156.0 L418.5,158.8 L418.6,161.4 L418.7,163.9 L418.8,166.4 L419.0,169.0 L419.1,171.7 L419.3,174.5 L419.5,177.4 L419.7,180.2 L420.0,183.0 L420.2,185.8 L420.5,188.6 L420.8,191.3 L421.1,194.1 L421.4,197.0 L421.6,199.5 L421.8,202.1 L422.0,204.8 L422.1,207.3 L422.3,209.8 L422.5,212.0 L422.6,214.8 L422.6,217.3 L422.7,219.6 L423.0,222.0 L423.3,224.6 L423.9,227.3 L424.4,230.0 L425.0,233.0 L425.4,235.7 L425.8,238.7 L426.2,241.7 L426.6,244.5 L427.0,247.0 L427.3,250.2 L427.6,252.7 L427.9,255.0 L428.8,258.0 L429.7,261.0 L430.1,263.6 L430.5,266.4 L431.1,269.1 L432.0,271.6 L433.1,273.9 L434.5,276.3 L436.3,278.8 L438.3,281.2 L440.4,283.6 L442.7,286.0 L445.1,288.3 L447.3,290.7 L449.1,292.9 L450.8,295.3 L452.7,297.6 L454.3,299.4 L456.0,301.2 L458.0,303.0 L460.5,304.8 L462.8,306.0 L465.6,307.4 L468.6,308.8 L471.5,310.1 L473.9,311.1 L475.6,311.9 L476.4,310.1 L474.7,309.3 L472.2,308.3 L469.3,307.1 L466.4,305.8 L463.7,304.5 L461.5,303.2 L459.1,301.5 L457.3,299.8 L455.8,298.1 L454.3,296.4 L452.4,294.1 L450.7,291.7 L448.7,289.3 L446.4,287.0 L444.0,284.7 L441.6,282.4 L439.4,280.1 L437.3,277.9 L435.5,275.7 L433.9,273.5 L432.6,271.3 L431.5,268.9 L430.8,266.3 L430.4,263.5 L429.9,261.0 L428.9,258.0 L428.1,255.0 L427.7,252.7 L427.4,250.2 L427.0,247.0 L426.7,244.5 L426.3,241.7 L425.9,238.7 L425.5,235.7 L425.0,233.0 L424.5,230.0 L424.0,227.2 L423.4,224.6 L423.0,222.0 L422.8,219.5 L422.7,217.2 L422.7,214.8 L422.5,212.0 L422.4,209.8 L422.2,207.3 L422.1,204.7 L421.9,202.1 L421.7,199.5 L421.4,197.0 L421.2,194.1 L420.9,191.3 L420.6,188.5 L420.3,185.8 L420.0,183.0 L419.8,180.2 L419.6,177.3 L419.4,174.5 L419.2,171.7 L419.0,169.0 L418.9,166.4 L418.8,163.9 L418.7,161.4 L418.6,158.8 L418.3,156.0 L418.1,153.4 L417.8,150.6 L417.5,147.7 L417.2,144.7 L416.8,141.8 L416.4,139.0 L416.1,136.3 L415.7,133.6 L415.3,130.9 L414.9,128.3 L414.5,125.6 L414.0,123.0 L413.6,120.3 L413.2,117.4 L412.8,114.6 L412.4,111.9 L412.0,109.3 L411.5,107.0 L410.9,104.0 L410.3,101.4 L409.7,99.1 L409.0,97.0 L407.4,93.4 L406.1,91.0Z" fill="#bdbdbd"/></g>
<g style="mix-blend-mode:lighten"><path d="M22.0,200.2 L22.3,202.1 L22.6,204.8 L23.0,208.0 L23.3,211.2 L23.5,214.2 L23.5,216.9 L23.5,219.7 L23.4,222.4 L23.3,225.3 L23.3,228.2 L23.4,231.1 L23.5,234.0 L23.7,236.8 L23.9,239.6 L24.1,242.3 L24.2,245.6 L24.3,248.8 L24.4,251.9 L24.6,254.7 L25.2,258.4 L25.9,261.1 L26.6,264.2 L27.5,267.6 L28.3,271.3 L29.4,275.1 L31.3,278.6 L33.3,281.7 L35.1,284.8 L37.3,288.1 L39.1,290.5 L41.0,292.6 L43.0,294.7 L45.0,296.8 L47.1,298.9 L49.2,300.9 L51.2,303.0 L53.5,305.2 L56.0,307.3 L58.4,309.3 L61.3,311.5 L65.0,313.6 L68.2,314.9 L71.6,316.1 L75.0,317.3 L77.9,318.2 L79.8,318.9 L84.2,303.9 L82.1,303.4 L79.2,302.7 L76.0,301.9 L73.0,301.1 L71.0,300.4 L68.6,299.4 L66.8,298.2 L64.8,296.7 L62.8,295.0 L60.9,293.1 L58.8,291.1 L56.8,289.1 L54.8,287.2 L53.0,285.3 L51.3,283.4 L49.7,281.5 L48.3,279.9 L46.3,277.2 L44.1,274.3 L41.8,271.4 L39.8,268.9 L37.7,266.7 L35.9,264.4 L34.9,261.8 L34.1,258.9 L33.3,256.4 L32.4,253.3 L32.0,251.0 L31.5,248.2 L31.0,245.0 L30.5,241.7 L30.2,239.0 L29.8,236.2 L29.4,233.4 L29.1,230.6 L28.7,227.8 L28.5,225.1 L28.3,222.4 L28.1,219.5 L27.8,216.7 L27.5,213.8 L27.0,210.7 L26.5,207.5 L25.9,204.3 L25.3,201.7 L25.0,199.8Z" fill="#1a1a1a"/><path d="M22.3,200.2 L22.5,202.1 L22.9,204.8 L23.3,207.9 L23.6,211.2 L23.9,214.1 L23.9,216.9 L23.9,219.6 L23.8,222.4 L23.7,225.3 L23.7,228.1 L23.9,231.0 L24.1,233.9 L24.3,236.8 L24.5,239.6 L24.6,242.3 L24.8,245.5 L24.9,248.8 L25.1,251.8 L25.3,254.6 L25.9,258.2 L26.6,260.9 L27.4,264.0 L28.2,267.3 L29.1,270.9 L30.4,274.5 L32.3,277.9 L34.2,281.1 L36.1,284.1 L38.3,287.4 L40.1,289.7 L41.9,291.8 L43.9,293.9 L45.9,296.0 L48.0,298.0 L50.0,300.0 L52.1,302.1 L54.4,304.2 L56.8,306.4 L59.2,308.3 L62.0,310.4 L65.6,312.4 L68.7,313.7 L72.0,314.9 L75.4,316.0 L78.2,316.9 L80.2,317.5 L83.8,305.3 L81.7,304.7 L78.8,304.0 L75.6,303.2 L72.6,302.3 L70.4,301.6 L67.9,300.4 L66.0,299.2 L64.0,297.6 L62.0,295.9 L60.0,294.0 L58.0,292.0 L55.9,290.0 L54.0,288.0 L52.1,286.1 L50.4,284.2 L48.8,282.3 L47.3,280.6 L45.3,277.9 L43.2,274.9 L40.9,272.1 L38.8,269.5 L36.9,267.1 L35.2,264.7 L34.2,262.0 L33.4,259.1 L32.5,256.5 L31.7,253.4 L31.3,251.1 L30.9,248.2 L30.4,245.0 L30.0,241.7 L29.6,239.1 L29.2,236.3 L28.9,233.5 L28.5,230.6 L28.3,227.9 L28.0,225.1 L27.8,222.4 L27.7,219.6 L27.4,216.7 L27.1,213.9 L26.7,210.8 L26.1,207.5 L25.6,204.4 L25.1,201.7 L24.7,199.8Z" fill="#474747"/><path d="M22.5,200.2 L22.8,202.1 L23.2,204.8 L23.6,207.9 L23.9,211.1 L24.2,214.1 L24.3,216.9 L24.3,219.6 L24.2,222.4 L24.1,225.3 L24.2,228.1 L24.3,231.0 L24.5,233.9 L24.7,236.7 L25.0,239.5 L25.2,242.2 L25.3,245.5 L25.5,248.7 L25.7,251.7 L25.9,254.5 L26.6,258.0 L27.3,260.7 L28.0,263.8 L28.9,267.0 L29.9,270.5 L31.2,274.0 L33.1,277.4 L35.1,280.5 L37.0,283.5 L39.2,286.7 L40.9,288.9 L42.8,291.0 L44.7,293.1 L46.7,295.2 L48.8,297.2 L50.8,299.3 L52.9,301.3 L55.1,303.4 L57.5,305.5 L59.8,307.4 L62.5,309.4 L66.0,311.3 L69.0,312.5 L72.4,313.7 L75.7,314.8 L78.6,315.7 L80.6,316.3 L83.4,306.5 L81.4,305.9 L78.5,305.2 L75.3,304.3 L72.2,303.4 L70.0,302.7 L67.3,301.4 L65.4,300.1 L63.3,298.5 L61.2,296.7 L59.2,294.8 L57.2,292.7 L55.1,290.8 L53.2,288.8 L51.3,286.9 L49.6,285.0 L47.9,283.1 L46.4,281.3 L44.4,278.5 L42.3,275.5 L40.0,272.6 L38.0,270.0 L36.1,267.5 L34.5,265.0 L33.5,262.2 L32.7,259.3 L31.9,256.7 L31.1,253.5 L30.7,251.2 L30.3,248.3 L29.9,245.1 L29.4,241.8 L29.1,239.1 L28.7,236.3 L28.4,233.5 L28.1,230.7 L27.8,227.9 L27.6,225.1 L27.4,222.4 L27.3,219.6 L27.1,216.7 L26.8,213.9 L26.4,210.8 L25.9,207.6 L25.3,204.4 L24.8,201.7 L24.5,199.8Z" fill="#7a7a7a"/><path d="M23.5,200.0 L23.7,201.9 L24.2,204.6 L24.7,207.7 L25.1,211.0 L25.5,214.0 L25.6,216.8 L25.7,219.6 L25.8,222.4 L25.8,225.2 L26.0,228.0 L26.2,230.8 L26.4,233.7 L26.7,236.5 L27.0,239.3 L27.3,242.0 L27.6,245.3 L27.8,248.5 L28.1,251.5 L28.4,254.0 L29.0,257.4 L29.7,260.1 L30.5,263.1 L31.3,266.1 L32.4,269.3 L33.8,272.5 L35.6,275.7 L37.5,278.8 L39.3,281.9 L41.4,285.0 L43.0,287.2 L44.7,289.3 L46.6,291.3 L48.5,293.4 L50.6,295.4 L52.6,297.4 L54.7,299.4 L56.8,301.5 L59.2,303.5 L61.4,305.3 L63.9,307.1 L67.2,308.9 L69.9,309.9 L73.2,311.0 L76.5,312.1 L79.4,312.9 L81.4,313.5 L82.6,309.3 L80.6,308.7 L77.7,307.9 L74.4,307.0 L71.3,306.0 L68.8,305.1 L66.0,303.7 L63.8,302.2 L61.6,300.5 L59.5,298.6 L57.4,296.6 L55.4,294.6 L53.3,292.6 L51.3,290.6 L49.4,288.7 L47.6,286.7 L45.8,284.8 L44.2,283.0 L42.0,280.1 L39.9,277.2 L37.6,274.3 L35.4,271.5 L33.6,268.7 L32.1,265.9 L31.1,262.9 L30.3,259.9 L29.4,257.3 L28.6,254.0 L28.3,251.5 L27.9,248.5 L27.6,245.3 L27.3,242.0 L27.1,239.3 L26.8,236.5 L26.5,233.7 L26.3,230.8 L26.0,228.0 L25.9,225.2 L25.9,222.4 L25.8,219.6 L25.7,216.8 L25.5,214.0 L25.2,211.0 L24.8,207.7 L24.3,204.6 L23.8,201.9 L23.5,200.0Z" fill="#9e9e9e"/><path d="M23.5,200.0 L23.7,201.9 L24.2,204.6 L24.7,207.7 L25.1,211.0 L25.5,214.0 L25.6,216.8 L25.7,219.6 L25.8,222.4 L25.8,225.2 L26.0,228.0 L26.2,230.8 L26.4,233.7 L26.7,236.5 L27.0,239.3 L27.3,242.0 L27.6,245.3 L27.8,248.5 L28.1,251.5 L28.4,254.0 L29.1,257.4 L29.9,260.0 L30.6,263.0 L31.5,266.1 L32.7,269.2 L34.2,272.3 L36.0,275.4 L38.1,278.4 L40.0,281.5 L42.1,284.5 L43.7,286.6 L45.4,288.7 L47.3,290.7 L49.2,292.7 L51.2,294.7 L53.3,296.7 L55.3,298.8 L57.5,300.8 L59.7,302.8 L62.0,304.6 L64.4,306.3 L67.6,308.0 L70.3,309.0 L73.5,310.1 L76.8,311.1 L79.7,311.9 L81.7,312.5 L82.3,310.3 L80.3,309.7 L77.4,308.9 L74.1,308.0 L71.0,307.0 L68.4,306.0 L65.5,304.5 L63.2,302.9 L61.1,301.2 L58.9,299.3 L56.8,297.3 L54.7,295.3 L52.7,293.3 L50.7,291.3 L48.7,289.3 L46.9,287.3 L45.2,285.4 L43.5,283.5 L41.4,280.5 L39.3,277.6 L37.1,274.6 L35.0,271.7 L33.3,268.8 L31.9,265.9 L30.9,263.0 L30.1,260.0 L29.3,257.4 L28.6,254.0 L28.2,251.5 L27.9,248.5 L27.6,245.3 L27.3,242.0 L27.1,239.3 L26.8,236.5 L26.5,233.7 L26.3,230.8 L26.0,228.0 L25.9,225.2 L25.9,222.4 L25.8,219.6 L25.7,216.8 L25.5,214.0 L25.2,211.0 L24.8,207.7 L24.3,204.6 L23.8,201.9 L23.5,200.0Z" fill="#bdbdbd"/></g>
<g style="mix-blend-mode:lighten"><path d="M148.5,311.3 L148.8,309.3 L149.4,306.3 L150.0,302.2 L150.3,300.1 L150.6,297.7 L150.9,295.2 L151.3,292.5 L151.6,289.5 L151.9,286.4 L152.2,283.1 L152.4,280.9 L152.6,278.5 L152.8,276.0 L152.9,273.5 L153.1,270.8 L153.2,268.1 L153.4,265.4 L153.5,262.8 L153.7,260.1 L153.9,257.6 L154.0,255.1 L154.2,252.4 L154.5,249.8 L154.7,247.1 L154.9,244.4 L155.1,241.8 L155.3,239.3 L155.6,236.8 L155.8,234.5 L156.0,232.3 L156.2,230.2 L156.6,227.2 L157.0,224.6 L157.4,222.2 L157.7,220.0 L158.1,217.8 L158.5,215.4 L158.8,212.9 L159.2,210.5 L159.5,208.1 L159.9,205.6 L160.2,203.0 L160.6,200.3 L161.0,197.8 L161.3,195.2 L161.6,192.6 L162.0,189.9 L162.4,187.2 L162.7,184.7 L163.1,182.3 L163.6,179.3 L164.1,176.5 L164.6,173.8 L165.1,171.2 L165.8,168.4 L166.5,165.6 L167.2,162.6 L168.0,159.7 L168.8,157.0 L169.4,154.5 L170.1,151.3 L170.5,148.8 L171.2,146.7 L172.7,143.5 L174.6,140.8 L176.7,138.3 L179.0,135.6 L181.0,132.8 L182.9,130.1 L183.9,128.2 L185.2,126.0 L186.5,123.9 L188.0,121.8 L189.7,119.6 L191.5,117.2 L193.1,113.9 L194.4,111.2 L195.7,109.7 L197.5,107.8 L199.5,105.3 L201.3,102.3 L202.9,100.1 L204.1,99.4 L206.4,98.1 L208.8,96.9 L210.4,95.9 L203.6,86.1 L202.1,87.3 L200.0,89.1 L197.6,91.3 L195.1,93.9 L193.0,97.7 L191.9,100.7 L190.7,102.2 L189.0,104.3 L187.2,106.8 L185.5,110.1 L184.1,112.8 L183.0,114.4 L181.3,116.2 L179.5,118.1 L177.6,120.0 L175.6,121.8 L173.7,123.9 L171.8,127.2 L170.4,130.4 L168.9,133.6 L167.4,137.2 L166.5,141.3 L165.8,145.3 L165.4,147.9 L165.1,150.4 L164.6,153.5 L164.1,155.9 L163.5,158.6 L162.9,161.6 L162.2,164.6 L161.6,167.6 L161.1,170.3 L160.5,173.0 L160.0,175.7 L159.5,178.6 L158.9,181.7 L158.6,184.1 L158.2,186.7 L157.8,189.3 L157.5,192.0 L157.1,194.7 L156.7,197.3 L156.4,199.7 L155.9,202.3 L155.4,204.8 L154.9,207.3 L154.4,209.7 L153.9,212.1 L153.5,214.6 L153.2,217.0 L152.8,219.3 L152.5,221.5 L152.3,224.0 L152.0,226.7 L151.8,229.8 L151.6,231.9 L151.5,234.1 L151.4,236.5 L151.3,239.0 L151.2,241.6 L151.1,244.2 L150.9,246.8 L150.8,249.5 L150.7,252.2 L150.6,254.9 L150.4,257.4 L150.3,259.9 L150.1,262.6 L149.9,265.2 L149.8,267.9 L149.6,270.6 L149.4,273.2 L149.3,275.8 L149.1,278.3 L148.9,280.7 L148.8,282.9 L148.5,286.1 L148.2,289.2 L148.0,292.1 L147.7,294.9 L147.5,297.4 L147.2,299.7 L147.0,301.8 L146.4,305.8 L145.9,308.8 L145.5,310.7Z" fill="#1a1a1a"/><path d="M148.2,311.2 L148.6,309.3 L149.1,306.3 L149.7,302.2 L150.0,300.0 L150.3,297.7 L150.6,295.2 L151.0,292.4 L151.3,289.5 L151.6,286.4 L151.9,283.1 L152.1,280.9 L152.3,278.5 L152.4,276.0 L152.6,273.4 L152.8,270.8 L152.9,268.1 L153.1,265.4 L153.2,262.7 L153.4,260.1 L153.6,257.6 L153.7,255.1 L153.9,252.4 L154.1,249.7 L154.3,247.1 L154.5,244.4 L154.8,241.8 L155.0,239.2 L155.2,236.8 L155.4,234.4 L155.6,232.2 L155.8,230.2 L156.2,227.1 L156.6,224.5 L156.9,222.2 L157.3,219.9 L157.7,217.7 L158.0,215.3 L158.4,212.9 L158.7,210.4 L159.1,208.0 L159.5,205.5 L159.9,203.0 L160.2,200.3 L160.6,197.8 L160.9,195.2 L161.3,192.5 L161.6,189.8 L162.0,187.2 L162.3,184.6 L162.7,182.3 L163.2,179.2 L163.7,176.4 L164.2,173.7 L164.8,171.1 L165.4,168.4 L166.1,165.5 L166.8,162.5 L167.6,159.6 L168.4,156.9 L169.0,154.4 L169.7,151.2 L170.1,148.8 L170.7,146.6 L172.2,143.3 L173.9,140.4 L176.0,137.9 L178.2,135.1 L180.2,132.3 L182.0,129.5 L183.2,127.6 L184.5,125.5 L185.9,123.3 L187.4,121.3 L189.1,119.2 L190.8,116.8 L192.4,113.5 L193.8,110.8 L195.1,109.3 L196.9,107.3 L198.9,104.9 L200.5,101.9 L202.2,99.6 L203.5,98.7 L205.8,97.3 L208.2,96.0 L209.8,95.0 L204.2,87.0 L202.7,88.2 L200.6,89.9 L198.2,92.0 L195.8,94.4 L193.8,98.1 L192.5,101.1 L191.4,102.7 L189.6,104.7 L187.8,107.2 L186.2,110.5 L184.8,113.2 L183.6,114.8 L181.9,116.7 L180.1,118.7 L178.3,120.5 L176.4,122.4 L174.6,124.5 L172.7,127.7 L171.2,130.9 L169.6,134.0 L168.1,137.6 L167.0,141.5 L166.3,145.4 L165.9,148.0 L165.5,150.5 L165.0,153.6 L164.5,156.0 L163.9,158.7 L163.3,161.7 L162.6,164.7 L162.0,167.6 L161.5,170.4 L160.9,173.1 L160.4,175.8 L159.8,178.6 L159.3,181.7 L158.9,184.1 L158.6,186.7 L158.2,189.4 L157.8,192.1 L157.5,194.7 L157.1,197.3 L156.8,199.7 L156.3,202.4 L155.8,204.9 L155.3,207.4 L154.8,209.8 L154.4,212.2 L154.0,214.7 L153.6,217.1 L153.3,219.3 L153.0,221.6 L152.7,224.0 L152.4,226.7 L152.2,229.8 L152.0,231.9 L151.9,234.2 L151.8,236.5 L151.6,239.0 L151.5,241.6 L151.4,244.2 L151.3,246.9 L151.2,249.6 L151.0,252.2 L150.9,254.9 L150.7,257.4 L150.6,259.9 L150.4,262.6 L150.3,265.3 L150.1,267.9 L149.9,270.6 L149.7,273.3 L149.6,275.8 L149.4,278.3 L149.2,280.7 L149.1,282.9 L148.8,286.1 L148.5,289.2 L148.3,292.2 L148.0,294.9 L147.8,297.4 L147.5,299.7 L147.3,301.8 L146.7,305.9 L146.2,308.8 L145.8,310.8Z" fill="#474747"/><path d="M148.0,311.2 L148.3,309.2 L148.9,306.2 L149.5,302.1 L149.8,300.0 L150.1,297.7 L150.4,295.1 L150.7,292.4 L151.0,289.5 L151.4,286.4 L151.7,283.1 L151.8,280.9 L152.0,278.5 L152.2,276.0 L152.3,273.4 L152.5,270.8 L152.6,268.1 L152.8,265.4 L153.0,262.7 L153.1,260.1 L153.3,257.5 L153.5,255.1 L153.6,252.4 L153.8,249.7 L154.0,247.0 L154.2,244.4 L154.4,241.8 L154.6,239.2 L154.9,236.8 L155.1,234.4 L155.3,232.2 L155.5,230.1 L155.8,227.1 L156.2,224.5 L156.5,222.1 L156.9,219.9 L157.3,217.6 L157.6,215.3 L158.0,212.8 L158.4,210.4 L158.7,208.0 L159.1,205.5 L159.5,202.9 L159.9,200.2 L160.2,197.7 L160.6,195.1 L160.9,192.5 L161.3,189.8 L161.6,187.1 L162.0,184.6 L162.4,182.2 L162.9,179.2 L163.4,176.4 L163.9,173.7 L164.5,171.0 L165.1,168.3 L165.7,165.4 L166.5,162.5 L167.3,159.5 L168.0,156.8 L168.6,154.3 L169.3,151.1 L169.7,148.7 L170.3,146.5 L171.7,143.1 L173.4,140.2 L175.3,137.5 L177.5,134.7 L179.5,131.8 L181.3,129.0 L182.5,127.1 L183.9,125.0 L185.3,122.9 L186.9,120.8 L188.6,118.7 L190.2,116.4 L191.8,113.2 L193.2,110.5 L194.5,108.8 L196.3,106.9 L198.2,104.5 L199.9,101.5 L201.6,99.1 L203.0,98.1 L205.3,96.6 L207.6,95.2 L209.3,94.2 L204.7,87.8 L203.3,88.9 L201.1,90.7 L198.7,92.7 L196.4,94.9 L194.4,98.5 L193.2,101.5 L191.9,103.1 L190.2,105.2 L188.4,107.5 L186.8,110.8 L185.4,113.6 L184.1,115.3 L182.5,117.2 L180.7,119.1 L178.9,121.0 L177.0,122.9 L175.3,125.0 L173.4,128.2 L171.9,131.3 L170.2,134.4 L168.6,137.8 L167.5,141.6 L166.7,145.5 L166.3,148.1 L165.9,150.6 L165.4,153.7 L164.9,156.0 L164.3,158.8 L163.6,161.8 L163.0,164.8 L162.3,167.7 L161.8,170.5 L161.2,173.1 L160.7,175.9 L160.2,178.7 L159.6,181.8 L159.3,184.2 L158.9,186.7 L158.5,189.4 L158.2,192.1 L157.8,194.8 L157.5,197.4 L157.1,199.8 L156.6,202.4 L156.2,205.0 L155.7,207.4 L155.2,209.8 L154.8,212.3 L154.4,214.7 L154.0,217.1 L153.7,219.4 L153.4,221.6 L153.1,224.1 L152.8,226.8 L152.5,229.9 L152.4,232.0 L152.2,234.2 L152.1,236.6 L152.0,239.0 L151.8,241.6 L151.7,244.2 L151.6,246.9 L151.4,249.6 L151.3,252.3 L151.1,254.9 L151.0,257.4 L150.8,260.0 L150.7,262.6 L150.5,265.3 L150.4,268.0 L150.2,270.6 L150.0,273.3 L149.9,275.9 L149.7,278.3 L149.5,280.7 L149.3,282.9 L149.1,286.2 L148.8,289.3 L148.5,292.2 L148.3,294.9 L148.0,297.4 L147.8,299.8 L147.5,301.9 L146.9,305.9 L146.4,308.9 L146.0,310.8Z" fill="#7a7a7a"/><path d="M147.0,311.0 L147.4,309.0 L148.0,306.1 L148.5,302.0 L148.8,299.9 L149.1,297.6 L149.4,295.0 L149.7,292.3 L150.0,289.4 L150.3,286.3 L150.5,283.0 L150.7,280.8 L150.9,278.4 L151.1,275.9 L151.2,273.4 L151.4,270.7 L151.5,268.0 L151.7,265.3 L151.9,262.7 L152.0,260.0 L152.2,257.5 L152.3,255.0 L152.5,252.3 L152.7,249.7 L152.9,247.0 L153.0,244.3 L153.2,241.7 L153.4,239.1 L153.5,236.7 L153.7,234.3 L153.9,232.1 L154.0,230.0 L154.4,226.9 L154.7,224.3 L155.0,221.9 L155.3,219.6 L155.7,217.4 L156.0,215.0 L156.4,212.5 L156.8,210.1 L157.3,207.7 L157.7,205.2 L158.1,202.7 L158.5,200.0 L158.9,197.6 L159.3,195.0 L159.6,192.3 L160.0,189.6 L160.3,186.9 L160.7,184.4 L161.1,182.0 L161.6,179.0 L162.1,176.1 L162.7,173.4 L163.2,170.8 L163.8,168.0 L164.5,165.1 L165.3,162.2 L166.0,159.2 L166.7,156.5 L167.3,154.1 L167.9,150.9 L168.3,148.4 L168.9,146.1 L170.2,142.6 L171.8,139.4 L173.8,136.5 L175.9,133.7 L177.8,130.8 L179.6,127.9 L180.9,125.9 L182.4,123.8 L183.9,121.7 L185.5,119.7 L187.2,117.7 L188.7,115.5 L190.2,112.5 L191.7,109.6 L193.2,107.7 L195.0,105.8 L196.8,103.7 L198.3,100.7 L200.1,97.9 L201.8,96.5 L204.1,94.9 L206.4,93.4 L208.0,92.4 L206.0,89.6 L204.5,90.7 L202.3,92.3 L199.9,94.2 L197.9,96.1 L196.0,99.3 L194.6,102.3 L193.2,104.2 L191.5,106.3 L189.9,108.4 L188.4,111.5 L186.9,114.5 L185.5,116.3 L183.8,118.3 L182.1,120.3 L180.4,122.2 L178.6,124.1 L177.0,126.1 L175.1,129.2 L173.5,132.3 L171.8,135.3 L170.2,138.6 L169.1,142.2 L168.1,145.9 L167.7,148.3 L167.3,150.8 L166.7,153.9 L166.2,156.4 L165.6,159.1 L164.9,162.1 L164.2,165.1 L163.6,168.0 L163.0,170.7 L162.5,173.4 L161.9,176.1 L161.4,178.9 L160.9,182.0 L160.6,184.4 L160.2,186.9 L159.9,189.6 L159.5,192.3 L159.2,195.0 L158.8,197.5 L158.5,200.0 L158.0,202.7 L157.6,205.2 L157.2,207.7 L156.7,210.1 L156.3,212.5 L156.0,215.0 L155.6,217.4 L155.2,219.6 L154.9,221.9 L154.6,224.3 L154.3,226.9 L154.0,230.0 L153.8,232.1 L153.6,234.3 L153.4,236.7 L153.3,239.1 L153.1,241.7 L152.9,244.3 L152.8,247.0 L152.6,249.6 L152.4,252.3 L152.3,255.0 L152.1,257.5 L151.9,260.0 L151.8,262.7 L151.6,265.3 L151.4,268.0 L151.3,270.7 L151.1,273.4 L151.0,275.9 L150.8,278.4 L150.6,280.8 L150.5,283.0 L150.2,286.3 L149.9,289.4 L149.6,292.3 L149.3,295.0 L149.0,297.6 L148.7,299.9 L148.5,302.0 L147.9,306.1 L147.3,309.0 L147.0,311.0Z" fill="#9e9e9e"/><path d="M147.0,311.0 L147.4,309.0 L148.0,306.1 L148.5,302.0 L148.8,299.9 L149.1,297.6 L149.4,295.0 L149.7,292.3 L150.0,289.4 L150.3,286.3 L150.5,283.0 L150.7,280.8 L150.9,278.4 L151.1,275.9 L151.2,273.4 L151.4,270.7 L151.5,268.0 L151.7,265.3 L151.9,262.7 L152.0,260.0 L152.2,257.5 L152.3,255.0 L152.5,252.3 L152.7,249.7 L152.9,247.0 L153.0,244.3 L153.2,241.7 L153.4,239.1 L153.5,236.7 L153.7,234.3 L153.9,232.1 L154.0,230.0 L154.4,226.9 L154.7,224.3 L155.0,221.9 L155.3,219.6 L155.7,217.4 L156.0,215.0 L156.4,212.5 L156.8,210.1 L157.3,207.7 L157.7,205.2 L158.1,202.7 L158.5,200.0 L158.9,197.6 L159.3,195.0 L159.6,192.3 L160.0,189.6 L160.3,186.9 L160.7,184.4 L161.0,182.0 L161.6,179.0 L162.1,176.1 L162.6,173.4 L163.2,170.8 L163.8,168.0 L164.4,165.1 L165.2,162.1 L165.9,159.2 L166.6,156.4 L167.1,154.0 L167.7,150.9 L168.2,148.4 L168.7,146.1 L169.9,142.5 L171.4,139.2 L173.3,136.3 L175.3,133.4 L177.1,130.4 L179.0,127.5 L180.4,125.5 L181.9,123.4 L183.5,121.4 L185.1,119.4 L186.8,117.3 L188.3,115.3 L189.8,112.2 L191.3,109.3 L192.8,107.4 L194.6,105.4 L196.3,103.3 L197.8,100.3 L199.6,97.5 L201.3,96.0 L203.7,94.3 L205.9,92.8 L207.5,91.7 L206.5,90.3 L205.0,91.4 L202.7,93.0 L200.4,94.7 L198.4,96.5 L196.5,99.7 L195.1,102.7 L193.6,104.6 L191.9,106.6 L190.3,108.7 L188.8,111.8 L187.3,114.7 L185.9,116.7 L184.2,118.6 L182.5,120.6 L180.9,122.6 L179.2,124.5 L177.6,126.5 L175.7,129.6 L174.1,132.6 L172.3,135.6 L170.6,138.8 L169.3,142.3 L168.3,145.9 L167.8,148.3 L167.4,150.8 L166.9,154.0 L166.3,156.4 L165.7,159.1 L165.0,162.1 L164.3,165.1 L163.6,168.0 L163.1,170.7 L162.5,173.4 L162.0,176.1 L161.5,178.9 L161.0,182.0 L160.6,184.4 L160.2,186.9 L159.9,189.6 L159.5,192.3 L159.2,195.0 L158.8,197.5 L158.5,200.0 L158.0,202.7 L157.6,205.2 L157.2,207.7 L156.7,210.1 L156.3,212.5 L156.0,215.0 L155.6,217.4 L155.2,219.6 L154.9,221.9 L154.6,224.3 L154.3,226.9 L154.0,230.0 L153.8,232.1 L153.6,234.3 L153.4,236.7 L153.3,239.1 L153.1,241.7 L152.9,244.3 L152.8,247.0 L152.6,249.6 L152.4,252.3 L152.3,255.0 L152.1,257.5 L151.9,260.0 L151.8,262.7 L151.6,265.3 L151.4,268.0 L151.3,270.7 L151.1,273.4 L151.0,275.9 L150.8,278.4 L150.6,280.8 L150.5,283.0 L150.2,286.3 L149.9,289.4 L149.6,292.3 L149.3,295.0 L149.0,297.6 L148.7,299.9 L148.5,302.0 L147.9,306.1 L147.3,309.0 L147.0,311.0Z" fill="#bdbdbd"/></g>
<g style="mix-blend-mode:lighten"><path d="M278.7,311.4 L279.2,309.6 L280.0,306.9 L281.0,303.8 L281.9,300.5 L282.6,297.4 L283.2,294.6 L283.6,291.7 L284.0,288.9 L284.4,286.1 L284.8,283.3 L285.2,280.5 L285.7,277.7 L286.1,274.9 L286.5,272.1 L286.9,269.3 L287.3,266.4 L287.8,263.4 L288.2,260.4 L288.7,257.7 L289.0,255.3 L289.2,252.9 L289.2,251.1 L289.6,247.3 L289.9,245.3 L290.2,243.0 L290.6,240.4 L291.1,237.7 L291.5,234.7 L292.0,231.7 L292.4,228.7 L292.8,225.8 L293.2,222.9 L293.5,220.3 L293.7,217.5 L293.9,214.7 L294.0,211.9 L294.1,209.2 L294.2,206.6 L294.2,204.0 L294.3,201.6 L294.4,199.3 L294.5,197.2 L294.7,193.7 L295.0,190.7 L295.3,187.9 L295.6,185.5 L295.9,183.3 L296.5,180.4 L297.1,178.1 L297.8,175.5 L298.2,173.1 L298.6,170.5 L299.0,168.0 L299.5,165.4 L300.0,163.0 L300.7,160.5 L301.4,158.1 L302.2,155.8 L303.0,153.3 L303.8,150.9 L304.7,148.6 L305.7,146.6 L307.1,144.0 L308.7,141.6 L310.1,139.7 L311.8,138.0 L314.0,135.8 L316.1,132.5 L317.7,129.5 L319.6,126.6 L321.6,123.4 L323.3,120.1 L324.8,116.9 L326.4,113.8 L327.9,110.8 L329.5,107.9 L331.3,104.9 L332.9,102.2 L334.6,100.2 L336.6,98.9 L339.5,97.1 L341.6,95.8 L334.4,86.2 L332.5,88.0 L329.6,90.7 L326.8,93.8 L324.8,97.8 L323.7,101.1 L322.3,104.1 L320.7,107.2 L319.3,110.2 L317.8,113.1 L316.0,115.9 L314.0,118.6 L311.9,121.4 L309.7,124.5 L307.8,127.7 L306.4,130.2 L305.0,131.7 L302.9,134.3 L301.3,137.0 L299.7,140.1 L298.3,143.4 L297.5,146.1 L296.8,148.9 L296.3,151.6 L295.8,154.2 L295.4,156.9 L295.1,159.5 L294.9,162.0 L294.5,164.6 L294.1,167.1 L293.7,169.7 L293.2,172.2 L292.8,174.5 L292.4,177.1 L292.1,179.6 L291.7,182.7 L291.4,185.0 L291.2,187.5 L291.0,190.3 L290.7,193.3 L290.3,196.8 L290.1,199.0 L289.8,201.3 L289.5,203.7 L289.1,206.2 L288.8,208.8 L288.4,211.5 L288.1,214.2 L287.8,216.9 L287.5,219.7 L287.3,222.3 L287.0,225.1 L286.8,228.1 L286.6,231.1 L286.4,234.1 L286.1,237.1 L285.9,239.9 L285.7,242.5 L285.5,244.8 L285.4,246.7 L284.9,250.6 L284.4,252.3 L284.0,254.7 L283.8,257.1 L283.5,259.9 L283.3,262.8 L283.0,265.8 L282.7,268.7 L282.3,271.5 L281.9,274.3 L281.5,277.1 L281.0,279.9 L280.6,282.7 L280.1,285.5 L279.7,288.3 L279.3,291.1 L278.9,293.8 L278.4,296.6 L277.8,299.5 L277.1,302.8 L276.4,305.9 L275.7,308.6 L275.3,310.6Z" fill="#1a1a1a"/><path d="M278.4,311.4 L278.9,309.5 L279.7,306.8 L280.6,303.7 L281.5,300.4 L282.2,297.4 L282.8,294.5 L283.2,291.7 L283.7,288.9 L284.0,286.1 L284.4,283.3 L284.9,280.5 L285.3,277.7 L285.7,274.9 L286.1,272.0 L286.5,269.2 L286.9,266.3 L287.4,263.3 L287.8,260.4 L288.2,257.7 L288.5,255.3 L288.8,252.8 L288.8,251.1 L289.3,247.2 L289.5,245.3 L289.8,243.0 L290.2,240.4 L290.6,237.6 L291.1,234.7 L291.5,231.7 L291.9,228.7 L292.3,225.7 L292.7,222.9 L292.9,220.2 L293.2,217.4 L293.4,214.6 L293.5,211.9 L293.6,209.2 L293.7,206.5 L293.8,204.0 L293.9,201.6 L294.0,199.3 L294.1,197.2 L294.4,193.7 L294.7,190.6 L294.9,187.9 L295.2,185.5 L295.5,183.3 L296.1,180.3 L296.7,178.0 L297.3,175.4 L297.7,173.0 L298.1,170.5 L298.5,167.9 L299.0,165.4 L299.6,162.9 L300.2,160.4 L300.9,158.0 L301.6,155.6 L302.4,153.2 L303.2,150.7 L304.1,148.4 L305.0,146.3 L306.5,143.6 L308.1,141.2 L309.4,139.3 L311.2,137.5 L313.3,135.3 L315.3,132.1 L317.0,129.1 L318.9,126.2 L320.9,123.0 L322.6,119.7 L324.2,116.5 L325.7,113.4 L327.2,110.5 L328.8,107.6 L330.6,104.5 L332.2,101.8 L333.9,99.6 L335.9,98.1 L338.8,96.3 L341.0,94.9 L335.0,87.1 L333.1,88.8 L330.3,91.4 L327.5,94.4 L325.5,98.2 L324.4,101.5 L322.9,104.4 L321.4,107.5 L319.9,110.6 L318.4,113.5 L316.6,116.3 L314.7,119.0 L312.6,121.8 L310.4,124.9 L308.5,128.1 L307.1,130.7 L305.6,132.3 L303.6,134.7 L302.0,137.4 L300.4,140.4 L299.0,143.7 L298.1,146.3 L297.5,149.0 L296.9,151.7 L296.4,154.4 L296.0,157.0 L295.6,159.6 L295.3,162.1 L295.0,164.6 L294.6,167.2 L294.1,169.8 L293.7,172.3 L293.3,174.6 L292.9,177.2 L292.5,179.6 L292.1,182.7 L291.8,185.1 L291.6,187.6 L291.3,190.3 L291.0,193.4 L290.7,196.8 L290.4,199.0 L290.2,201.3 L289.9,203.7 L289.6,206.2 L289.3,208.8 L288.9,211.5 L288.6,214.2 L288.3,217.0 L288.1,219.8 L287.8,222.4 L287.6,225.2 L287.3,228.2 L287.1,231.2 L286.8,234.2 L286.6,237.1 L286.4,239.9 L286.1,242.5 L285.9,244.8 L285.7,246.8 L285.2,250.6 L284.9,252.3 L284.5,254.7 L284.2,257.2 L284.0,259.9 L283.7,262.9 L283.4,265.9 L283.1,268.8 L282.7,271.6 L282.3,274.3 L281.9,277.1 L281.4,279.9 L281.0,282.7 L280.5,285.5 L280.1,288.3 L279.7,291.1 L279.3,293.9 L278.8,296.6 L278.2,299.6 L277.4,302.9 L276.7,306.0 L276.1,308.7 L275.6,310.6Z" fill="#474747"/><path d="M278.1,311.3 L278.7,309.4 L279.4,306.7 L280.3,303.6 L281.2,300.3 L281.9,297.3 L282.4,294.4 L282.9,291.6 L283.3,288.8 L283.7,286.0 L284.1,283.2 L284.5,280.4 L284.9,277.6 L285.4,274.8 L285.8,272.0 L286.2,269.2 L286.6,266.3 L287.0,263.3 L287.4,260.4 L287.8,257.6 L288.1,255.2 L288.4,252.8 L288.5,251.0 L288.9,247.2 L289.2,245.2 L289.5,242.9 L289.8,240.3 L290.2,237.6 L290.7,234.6 L291.1,231.6 L291.5,228.6 L291.9,225.7 L292.2,222.8 L292.5,220.2 L292.7,217.4 L292.9,214.6 L293.1,211.9 L293.2,209.1 L293.3,206.5 L293.4,204.0 L293.5,201.5 L293.6,199.3 L293.8,197.1 L294.1,193.6 L294.3,190.6 L294.6,187.9 L294.9,185.4 L295.2,183.2 L295.8,180.2 L296.3,177.9 L296.9,175.3 L297.3,172.9 L297.7,170.4 L298.1,167.8 L298.6,165.3 L299.2,162.8 L299.8,160.4 L300.4,157.9 L301.1,155.5 L301.8,153.0 L302.7,150.5 L303.5,148.2 L304.4,146.0 L305.9,143.3 L307.5,140.8 L308.9,138.8 L310.7,137.0 L312.7,134.9 L314.7,131.7 L316.4,128.7 L318.3,125.7 L320.3,122.6 L322.0,119.4 L323.6,116.2 L325.2,113.2 L326.7,110.2 L328.3,107.3 L330.0,104.2 L331.5,101.4 L333.3,99.1 L335.4,97.5 L338.3,95.6 L340.4,94.2 L335.6,87.8 L333.6,89.6 L330.8,92.1 L328.1,94.9 L326.2,98.6 L325.0,101.8 L323.5,104.7 L321.9,107.8 L320.5,110.8 L319.0,113.8 L317.2,116.6 L315.3,119.4 L313.2,122.3 L311.0,125.3 L309.2,128.5 L307.7,131.1 L306.2,132.8 L304.1,135.2 L302.5,137.8 L301.0,140.7 L299.6,144.0 L298.7,146.5 L298.0,149.2 L297.4,151.9 L296.9,154.5 L296.5,157.1 L296.1,159.6 L295.7,162.2 L295.4,164.7 L295.0,167.3 L294.5,169.9 L294.1,172.4 L293.7,174.7 L293.2,177.3 L292.8,179.7 L292.4,182.8 L292.1,185.1 L291.9,187.6 L291.7,190.3 L291.4,193.4 L291.0,196.9 L290.8,199.0 L290.5,201.3 L290.3,203.7 L290.0,206.3 L289.7,208.9 L289.4,211.6 L289.1,214.3 L288.8,217.0 L288.5,219.8 L288.3,222.4 L288.0,225.2 L287.8,228.2 L287.5,231.2 L287.2,234.2 L287.0,237.2 L286.7,240.0 L286.5,242.6 L286.3,244.9 L286.1,246.8 L285.6,250.7 L285.2,252.4 L284.9,254.8 L284.6,257.2 L284.3,260.0 L284.1,262.9 L283.8,265.9 L283.4,268.8 L283.0,271.6 L282.6,274.4 L282.2,277.2 L281.7,280.0 L281.3,282.8 L280.9,285.6 L280.5,288.4 L280.1,291.2 L279.6,294.0 L279.1,296.7 L278.5,299.7 L277.7,302.9 L277.0,306.1 L276.3,308.8 L275.9,310.7Z" fill="#7a7a7a"/><path d="M277.0,311.0 L277.5,309.1 L278.3,306.4 L279.1,303.3 L279.9,300.0 L280.5,297.0 L281.1,294.2 L281.5,291.4 L281.9,288.6 L282.3,285.8 L282.7,283.0 L283.2,280.2 L283.6,277.4 L284.0,274.6 L284.5,271.8 L284.8,269.0 L285.2,266.1 L285.6,263.1 L285.9,260.2 L286.3,257.4 L286.5,255.0 L286.9,252.6 L287.1,250.9 L287.5,247.0 L287.8,245.1 L288.0,242.8 L288.3,240.2 L288.7,237.4 L289.0,234.4 L289.3,231.4 L289.7,228.4 L290.0,225.5 L290.3,222.6 L290.5,220.0 L290.8,217.2 L291.1,214.5 L291.3,211.7 L291.5,209.0 L291.7,206.4 L291.9,203.9 L292.1,201.4 L292.3,199.1 L292.4,197.0 L292.8,193.5 L293.0,190.5 L293.3,187.7 L293.6,185.3 L293.8,183.0 L294.3,180.0 L294.8,177.6 L295.4,175.0 L295.8,172.7 L296.2,170.1 L296.7,167.6 L297.2,165.0 L297.7,162.5 L298.2,160.0 L298.7,157.6 L299.3,155.1 L300.1,152.6 L300.8,150.0 L301.7,147.6 L302.7,145.3 L304.2,142.4 L305.9,139.8 L307.4,137.7 L309.3,135.7 L311.2,133.7 L313.0,130.7 L314.7,127.6 L316.7,124.7 L318.7,121.6 L320.5,118.5 L322.2,115.5 L323.7,112.4 L325.2,109.5 L326.9,106.5 L328.6,103.5 L330.0,100.6 L331.8,97.9 L334.1,95.9 L337.0,93.9 L339.0,92.4 L337.0,89.6 L335.0,91.3 L332.1,93.6 L329.6,96.1 L327.7,99.4 L326.4,102.5 L324.9,105.5 L323.4,108.5 L321.9,111.6 L320.4,114.5 L318.7,117.5 L316.9,120.4 L314.8,123.3 L312.7,126.4 L310.9,129.5 L309.2,132.3 L307.5,134.1 L305.6,136.3 L304.1,138.8 L302.7,141.6 L301.3,144.7 L300.5,147.2 L299.8,149.7 L299.2,152.3 L298.7,154.9 L298.1,157.4 L297.7,160.0 L297.2,162.5 L296.8,165.0 L296.4,167.5 L296.0,170.1 L295.6,172.6 L295.2,175.0 L294.7,177.6 L294.2,180.0 L293.8,183.0 L293.5,185.3 L293.2,187.7 L292.9,190.5 L292.7,193.5 L292.4,197.0 L292.2,199.1 L292.0,201.4 L291.8,203.8 L291.6,206.4 L291.4,209.0 L291.2,211.7 L291.0,214.4 L290.7,217.2 L290.5,220.0 L290.2,222.6 L289.9,225.4 L289.6,228.4 L289.2,231.4 L288.9,234.4 L288.6,237.4 L288.2,240.2 L287.9,242.7 L287.7,245.0 L287.5,247.0 L287.0,250.8 L286.8,252.6 L286.5,255.0 L286.2,257.4 L285.8,260.2 L285.5,263.1 L285.1,266.1 L284.8,269.0 L284.4,271.8 L283.9,274.6 L283.5,277.4 L283.1,280.2 L282.7,283.0 L282.2,285.8 L281.8,288.6 L281.4,291.4 L281.0,294.2 L280.5,297.0 L279.8,300.0 L279.0,303.3 L278.2,306.4 L277.4,309.1 L277.0,311.0Z" fill="#9e9e9e"/><path d="M277.0,311.0 L277.5,309.1 L278.3,306.4 L279.1,303.3 L279.9,300.0 L280.5,297.0 L281.1,294.2 L281.5,291.4 L281.9,288.6 L282.3,285.8 L282.7,283.0 L283.2,280.2 L283.6,277.4 L284.0,274.6 L284.5,271.8 L284.8,269.0 L285.2,266.1 L285.6,263.1 L285.9,260.2 L286.3,257.4 L286.5,255.0 L286.9,252.6 L287.1,250.9 L287.5,247.0 L287.8,245.1 L288.0,242.8 L288.3,240.2 L288.7,237.4 L289.0,234.4 L289.3,231.4 L289.7,228.4 L290.0,225.5 L290.3,222.6 L290.5,220.0 L290.8,217.2 L291.1,214.5 L291.3,211.7 L291.5,209.0 L291.7,206.4 L291.9,203.9 L292.1,201.4 L292.3,199.1 L292.4,197.0 L292.8,193.5 L293.0,190.5 L293.3,187.7 L293.6,185.3 L293.8,183.0 L294.3,180.0 L294.8,177.6 L295.3,175.0 L295.8,172.7 L296.2,170.1 L296.6,167.6 L297.1,165.0 L297.6,162.5 L298.0,160.0 L298.6,157.5 L299.2,155.0 L299.9,152.5 L300.6,150.0 L301.4,147.5 L302.3,145.1 L303.8,142.2 L305.5,139.6 L307.0,137.4 L308.9,135.3 L310.7,133.4 L312.5,130.4 L314.2,127.3 L316.3,124.3 L318.3,121.3 L320.1,118.3 L321.8,115.2 L323.3,112.2 L324.8,109.2 L326.4,106.3 L328.1,103.3 L329.5,100.3 L331.3,97.5 L333.6,95.4 L336.5,93.2 L338.5,91.7 L337.5,90.3 L335.4,91.9 L332.6,94.2 L330.1,96.5 L328.2,99.7 L326.9,102.7 L325.4,105.7 L323.8,108.8 L322.4,111.8 L320.8,114.8 L319.1,117.7 L317.3,120.7 L315.2,123.7 L313.2,126.7 L311.4,129.8 L309.7,132.6 L308.0,134.5 L306.0,136.6 L304.6,139.0 L303.0,141.8 L301.7,144.9 L300.8,147.3 L300.1,149.8 L299.4,152.4 L298.8,155.0 L298.3,157.5 L297.8,160.0 L297.3,162.5 L296.9,165.0 L296.5,167.5 L296.1,170.1 L295.6,172.6 L295.3,175.0 L294.7,177.6 L294.2,180.0 L293.8,183.0 L293.5,185.3 L293.2,187.7 L292.9,190.5 L292.7,193.5 L292.4,197.0 L292.2,199.1 L292.0,201.4 L291.8,203.8 L291.6,206.4 L291.4,209.0 L291.2,211.7 L291.0,214.4 L290.7,217.2 L290.5,220.0 L290.2,222.6 L289.9,225.4 L289.6,228.4 L289.2,231.4 L288.9,234.4 L288.6,237.4 L288.2,240.2 L287.9,242.7 L287.7,245.0 L287.5,247.0 L287.0,250.8 L286.8,252.6 L286.5,255.0 L286.2,257.4 L285.8,260.2 L285.5,263.1 L285.1,266.1 L284.8,269.0 L284.4,271.8 L283.9,274.6 L283.5,277.4 L283.1,280.2 L282.7,283.0 L282.2,285.8 L281.8,288.6 L281.4,291.4 L281.0,294.2 L280.5,297.0 L279.8,300.0 L279.0,303.3 L278.2,306.4 L277.4,309.1 L277.0,311.0Z" fill="#bdbdbd"/></g>
<g style="mix-blend-mode:lighten"><path d="M412.7,311.4 L413.3,309.6 L414.1,306.9 L415.0,303.8 L415.9,300.5 L416.7,297.5 L417.3,294.6 L417.8,291.8 L418.3,289.0 L418.7,286.2 L419.1,283.4 L419.5,280.6 L419.9,277.7 L420.3,274.9 L420.7,272.1 L421.0,269.2 L421.4,266.3 L421.7,263.2 L421.9,260.3 L422.2,257.6 L422.4,255.2 L422.6,252.3 L422.8,250.1 L423.0,247.1 L423.2,244.6 L423.4,241.8 L423.6,238.8 L423.8,235.8 L424.0,233.1 L424.3,230.5 L424.5,228.3 L424.8,225.8 L425.1,222.1 L425.2,220.2 L425.4,217.9 L425.5,215.3 L425.7,212.6 L425.8,209.8 L426.0,207.0 L426.1,204.3 L426.3,201.7 L426.5,199.3 L426.6,197.2 L427.0,193.8 L427.4,191.0 L427.8,188.5 L428.2,186.0 L428.7,183.4 L429.2,180.6 L429.7,177.8 L430.3,175.0 L430.9,172.2 L431.5,169.6 L432.1,167.0 L432.7,164.6 L433.3,162.2 L434.1,159.7 L435.1,157.0 L436.0,154.8 L437.1,152.4 L438.2,149.8 L439.5,147.2 L440.6,144.7 L441.7,142.5 L442.7,140.7 L444.7,137.5 L446.2,136.0 L448.3,133.5 L450.5,130.7 L451.8,128.6 L453.0,126.4 L454.2,124.1 L456.3,120.9 L458.3,117.5 L460.0,114.1 L461.4,111.0 L462.9,108.1 L464.7,105.3 L466.5,102.8 L468.6,100.7 L470.7,99.3 L473.7,97.5 L475.9,96.2 L468.1,85.8 L466.2,87.6 L463.3,90.3 L460.4,93.3 L458.0,97.2 L456.3,100.7 L454.8,103.9 L453.4,107.0 L451.9,109.9 L450.3,112.5 L448.2,115.1 L445.8,117.9 L444.0,119.6 L442.2,121.4 L440.5,123.3 L438.3,126.5 L436.4,130.0 L435.4,133.1 L434.3,137.3 L433.7,139.3 L433.0,141.6 L432.1,144.3 L431.3,147.1 L430.4,149.9 L429.6,152.6 L428.9,155.0 L428.2,158.0 L427.6,160.7 L427.0,163.3 L426.6,165.8 L426.1,168.4 L425.6,171.2 L425.2,174.1 L424.7,176.9 L424.3,179.8 L423.9,182.6 L423.5,185.2 L423.0,187.7 L422.6,190.2 L422.2,193.2 L421.8,196.8 L421.6,198.9 L421.4,201.3 L421.2,204.0 L421.0,206.7 L420.8,209.5 L420.6,212.3 L420.5,215.0 L420.3,217.6 L420.2,219.9 L420.1,221.9 L420.0,225.5 L420.0,228.1 L420.0,230.3 L420.0,232.9 L419.9,235.6 L419.9,238.6 L419.8,241.6 L419.7,244.4 L419.6,246.9 L419.2,249.7 L418.8,251.9 L418.4,254.8 L418.2,257.3 L418.1,260.0 L418.0,263.0 L417.8,265.9 L417.6,268.8 L417.1,271.5 L416.6,274.3 L416.0,277.1 L415.4,279.8 L414.9,282.6 L414.4,285.4 L413.9,288.2 L413.3,291.0 L412.8,293.8 L412.3,296.5 L411.7,299.5 L411.0,302.8 L410.3,305.9 L409.7,308.6 L409.3,310.6Z" fill="#1a1a1a"/><path d="M412.4,311.4 L412.9,309.5 L413.7,306.8 L414.6,303.7 L415.5,300.4 L416.3,297.4 L416.9,294.6 L417.4,291.7 L417.9,288.9 L418.3,286.1 L418.7,283.3 L419.2,280.5 L419.6,277.7 L420.0,274.9 L420.4,272.0 L420.7,269.2 L421.0,266.2 L421.3,263.2 L421.6,260.3 L421.8,257.5 L422.0,255.2 L422.3,252.3 L422.5,250.1 L422.7,247.1 L422.9,244.6 L423.1,241.8 L423.3,238.7 L423.4,235.8 L423.6,233.1 L423.9,230.5 L424.1,228.3 L424.4,225.8 L424.6,222.1 L424.8,220.1 L424.9,217.8 L425.1,215.3 L425.2,212.6 L425.4,209.8 L425.5,207.0 L425.7,204.3 L425.8,201.7 L426.0,199.3 L426.2,197.2 L426.6,193.7 L427.0,190.9 L427.4,188.4 L427.8,186.0 L428.3,183.3 L428.8,180.5 L429.3,177.7 L429.8,174.9 L430.4,172.2 L431.0,169.5 L431.6,166.9 L432.2,164.4 L432.8,162.0 L433.6,159.5 L434.5,156.8 L435.4,154.6 L436.5,152.1 L437.6,149.5 L438.8,146.9 L440.0,144.4 L441.0,142.2 L441.9,140.4 L443.9,137.1 L445.3,135.5 L447.4,132.9 L449.6,130.0 L450.9,128.0 L452.2,125.8 L453.4,123.6 L455.5,120.4 L457.6,117.0 L459.3,113.7 L460.7,110.6 L462.2,107.7 L463.9,104.9 L465.7,102.3 L467.8,100.0 L470.1,98.5 L473.0,96.6 L475.2,95.3 L468.8,86.7 L466.8,88.5 L464.0,91.1 L461.2,94.0 L458.8,97.7 L457.1,101.1 L455.6,104.3 L454.1,107.4 L452.6,110.3 L451.0,113.0 L448.9,115.6 L446.6,118.4 L444.8,120.2 L443.0,122.0 L441.4,124.0 L439.2,127.1 L437.3,130.5 L436.2,133.5 L435.1,137.6 L434.5,139.6 L433.7,141.9 L432.8,144.5 L431.9,147.3 L431.0,150.1 L430.2,152.8 L429.5,155.2 L428.7,158.1 L428.1,160.8 L427.6,163.4 L427.1,165.9 L426.6,168.5 L426.1,171.3 L425.6,174.2 L425.2,177.0 L424.8,179.8 L424.3,182.7 L423.9,185.3 L423.4,187.7 L423.0,190.3 L422.6,193.3 L422.2,196.8 L422.0,199.0 L421.8,201.4 L421.6,204.0 L421.4,206.8 L421.3,209.6 L421.1,212.4 L420.9,215.1 L420.8,217.6 L420.7,219.9 L420.6,221.9 L420.4,225.6 L420.4,228.1 L420.4,230.3 L420.4,232.9 L420.3,235.6 L420.2,238.6 L420.1,241.6 L420.0,244.5 L419.9,246.9 L419.5,249.7 L419.1,251.9 L418.8,254.8 L418.6,257.3 L418.5,260.1 L418.3,263.0 L418.2,266.0 L417.9,268.8 L417.5,271.6 L417.0,274.3 L416.4,277.1 L415.8,279.9 L415.3,282.7 L414.8,285.5 L414.3,288.3 L413.8,291.1 L413.2,293.8 L412.7,296.6 L412.1,299.6 L411.4,302.9 L410.7,306.0 L410.0,308.7 L409.6,310.6Z" fill="#474747"/><path d="M412.1,311.3 L412.7,309.4 L413.4,306.7 L414.3,303.6 L415.2,300.4 L416.0,297.3 L416.5,294.5 L417.1,291.7 L417.5,288.8 L418.0,286.0 L418.4,283.2 L418.8,280.4 L419.3,277.6 L419.7,274.8 L420.1,272.0 L420.4,269.1 L420.8,266.2 L421.0,263.2 L421.3,260.3 L421.5,257.5 L421.7,255.1 L422.0,252.3 L422.2,250.0 L422.5,247.1 L422.6,244.6 L422.8,241.7 L423.0,238.7 L423.1,235.8 L423.3,233.1 L423.5,230.4 L423.7,228.3 L424.0,225.8 L424.2,222.1 L424.4,220.1 L424.5,217.8 L424.7,215.3 L424.8,212.6 L425.0,209.8 L425.1,207.0 L425.3,204.2 L425.5,201.6 L425.6,199.2 L425.8,197.2 L426.2,193.7 L426.6,190.8 L427.0,188.3 L427.4,185.9 L427.9,183.3 L428.4,180.5 L428.9,177.6 L429.4,174.8 L430.0,172.1 L430.6,169.4 L431.2,166.8 L431.7,164.3 L432.4,161.9 L433.1,159.4 L434.0,156.7 L434.9,154.4 L435.9,151.9 L437.0,149.3 L438.2,146.7 L439.3,144.2 L440.4,142.0 L441.2,140.1 L443.1,136.8 L444.5,135.0 L446.6,132.3 L448.8,129.5 L450.2,127.4 L451.5,125.2 L452.8,123.1 L454.9,119.9 L457.0,116.6 L458.6,113.4 L460.1,110.3 L461.6,107.4 L463.2,104.5 L465.0,101.9 L467.2,99.5 L469.5,97.8 L472.4,95.8 L474.6,94.4 L469.4,87.6 L467.4,89.3 L464.6,91.8 L461.8,94.5 L459.4,98.1 L457.8,101.5 L456.2,104.6 L454.7,107.7 L453.2,110.6 L451.6,113.4 L449.6,116.1 L447.2,118.9 L445.6,120.8 L443.8,122.6 L442.2,124.5 L440.0,127.7 L438.1,131.0 L437.0,133.9 L435.8,137.9 L435.1,139.8 L434.3,142.2 L433.4,144.8 L432.4,147.5 L431.5,150.3 L430.7,152.9 L430.0,155.3 L429.2,158.3 L428.5,161.0 L428.0,163.5 L427.5,166.0 L427.0,168.6 L426.5,171.4 L426.0,174.2 L425.6,177.1 L425.1,179.9 L424.7,182.7 L424.3,185.3 L423.8,187.8 L423.4,190.4 L423.0,193.3 L422.6,196.8 L422.4,199.0 L422.2,201.4 L422.0,204.0 L421.8,206.8 L421.7,209.6 L421.5,212.4 L421.3,215.1 L421.2,217.6 L421.1,219.9 L421.0,221.9 L420.8,225.6 L420.7,228.1 L420.7,230.3 L420.7,232.9 L420.6,235.6 L420.5,238.6 L420.4,241.6 L420.3,244.5 L420.1,246.9 L419.8,249.8 L419.5,252.0 L419.1,254.9 L418.9,257.3 L418.8,260.1 L418.6,263.0 L418.4,266.0 L418.2,268.9 L417.7,271.6 L417.3,274.4 L416.7,277.2 L416.1,280.0 L415.6,282.8 L415.1,285.6 L414.6,288.4 L414.1,291.1 L413.6,293.9 L413.0,296.7 L412.4,299.7 L411.7,302.9 L411.0,306.1 L410.3,308.8 L409.9,310.7Z" fill="#7a7a7a"/><path d="M411.0,311.0 L411.5,309.1 L412.2,306.4 L413.1,303.3 L413.9,300.0 L414.5,297.0 L415.1,294.2 L415.6,291.4 L416.1,288.6 L416.6,285.8 L417.0,283.0 L417.5,280.2 L418.0,277.4 L418.5,274.6 L419.0,271.8 L419.3,269.0 L419.6,266.1 L419.9,263.1 L420.1,260.2 L420.3,257.4 L420.4,255.0 L420.8,252.1 L421.1,249.9 L421.3,247.0 L421.5,244.5 L421.6,241.7 L421.8,238.7 L421.9,235.7 L422.0,233.0 L422.2,230.4 L422.3,228.2 L422.4,225.7 L422.6,222.0 L422.8,220.0 L422.9,217.7 L423.0,215.2 L423.2,212.5 L423.4,209.7 L423.5,206.9 L423.7,204.1 L423.9,201.5 L424.1,199.1 L424.2,197.0 L424.6,193.5 L425.0,190.6 L425.5,188.1 L425.9,185.6 L426.3,183.0 L426.8,180.2 L427.3,177.4 L427.8,174.5 L428.3,171.7 L428.9,169.0 L429.5,166.4 L430.0,164.0 L430.6,161.5 L431.4,158.9 L432.3,156.1 L433.2,153.8 L434.2,151.3 L435.4,148.7 L436.5,146.0 L437.7,143.5 L438.7,141.3 L439.5,139.4 L441.3,135.9 L442.7,133.9 L444.7,131.0 L446.9,128.1 L448.4,126.0 L449.8,124.0 L451.2,121.9 L453.3,118.8 L455.3,115.6 L456.9,112.5 L458.4,109.5 L460.0,106.6 L461.7,103.7 L463.4,100.8 L465.7,98.1 L468.1,96.1 L471.0,94.0 L473.1,92.5 L470.9,89.5 L468.9,91.1 L466.0,93.5 L463.3,95.9 L461.0,99.2 L459.3,102.3 L457.8,105.4 L456.4,108.5 L454.9,111.5 L453.3,114.4 L451.2,117.2 L448.8,120.1 L447.2,122.0 L445.6,124.0 L444.1,125.9 L441.8,129.0 L439.9,132.1 L438.8,134.7 L437.5,138.6 L436.8,140.5 L436.0,142.8 L435.1,145.4 L434.1,148.2 L433.2,150.9 L432.4,153.5 L431.7,155.9 L430.9,158.8 L430.3,161.4 L429.7,163.9 L429.2,166.4 L428.7,169.0 L428.2,171.7 L427.7,174.5 L427.2,177.3 L426.7,180.2 L426.3,183.0 L425.8,185.6 L425.4,188.1 L424.9,190.6 L424.5,193.5 L424.2,197.0 L424.0,199.1 L423.8,201.5 L423.6,204.1 L423.4,206.9 L423.3,209.7 L423.1,212.5 L422.9,215.2 L422.8,217.7 L422.7,220.0 L422.6,222.0 L422.3,225.7 L422.2,228.2 L422.1,230.4 L422.0,233.0 L421.8,235.7 L421.7,238.7 L421.5,241.7 L421.4,244.5 L421.3,247.0 L421.0,249.9 L420.7,252.1 L420.4,255.0 L420.2,257.4 L420.0,260.2 L419.8,263.1 L419.6,266.1 L419.3,269.0 L418.9,271.8 L418.4,274.6 L417.9,277.4 L417.4,280.2 L417.0,283.0 L416.5,285.8 L416.0,288.6 L415.5,291.4 L415.0,294.2 L414.5,297.0 L413.8,300.0 L413.0,303.3 L412.1,306.4 L411.4,309.1 L411.0,311.0Z" fill="#9e9e9e"/><path d="M411.0,311.0 L411.5,309.1 L412.2,306.4 L413.1,303.3 L413.9,300.0 L414.5,297.0 L415.1,294.2 L415.6,291.4 L416.1,288.6 L416.6,285.8 L417.0,283.0 L417.5,280.2 L418.0,277.4 L418.5,274.6 L419.0,271.8 L419.3,269.0 L419.6,266.1 L419.9,263.1 L420.1,260.2 L420.3,257.4 L420.4,255.0 L420.8,252.1 L421.1,249.9 L421.3,247.0 L421.5,244.5 L421.6,241.7 L421.8,238.7 L421.9,235.7 L422.0,233.0 L422.2,230.4 L422.3,228.2 L422.4,225.7 L422.6,222.0 L422.8,220.0 L422.9,217.7 L423.0,215.2 L423.2,212.5 L423.4,209.7 L423.5,206.9 L423.7,204.1 L423.9,201.5 L424.1,199.1 L424.2,197.0 L424.6,193.5 L425.0,190.6 L425.5,188.1 L425.9,185.6 L426.3,183.0 L426.8,180.2 L427.3,177.4 L427.8,174.5 L428.3,171.7 L428.9,169.0 L429.4,166.4 L430.0,163.9 L430.6,161.5 L431.3,158.9 L432.2,156.1 L433.0,153.8 L434.0,151.2 L435.1,148.5 L436.2,145.9 L437.3,143.3 L438.2,141.1 L439.0,139.2 L440.7,135.6 L442.0,133.4 L444.1,130.5 L446.3,127.6 L447.7,125.5 L449.2,123.5 L450.6,121.5 L452.8,118.4 L454.8,115.3 L456.4,112.3 L457.9,109.3 L459.5,106.3 L461.1,103.3 L462.9,100.4 L465.1,97.6 L467.6,95.5 L470.5,93.3 L472.6,91.8 L471.4,90.2 L469.4,91.8 L466.5,94.1 L463.9,96.4 L461.6,99.6 L459.9,102.7 L458.3,105.7 L456.9,108.7 L455.4,111.7 L453.8,114.7 L451.7,117.6 L449.4,120.5 L447.8,122.5 L446.3,124.5 L444.7,126.4 L442.5,129.5 L440.6,132.6 L439.4,135.0 L438.0,138.8 L437.2,140.7 L436.4,143.0 L435.4,145.6 L434.4,148.3 L433.5,151.0 L432.6,153.6 L431.8,155.9 L431.0,158.8 L430.3,161.4 L429.8,163.9 L429.3,166.4 L428.7,169.0 L428.2,171.7 L427.7,174.5 L427.2,177.3 L426.7,180.2 L426.3,183.0 L425.8,185.6 L425.4,188.1 L424.9,190.6 L424.5,193.5 L424.2,197.0 L424.0,199.1 L423.8,201.5 L423.6,204.1 L423.4,206.9 L423.3,209.7 L423.1,212.5 L422.9,215.2 L422.8,217.7 L422.7,220.0 L422.6,222.0 L422.3,225.7 L422.2,228.2 L422.1,230.4 L422.0,233.0 L421.8,235.7 L421.7,238.7 L421.5,241.7 L421.4,244.5 L421.3,247.0 L421.0,249.9 L420.7,252.1 L420.4,255.0 L420.2,257.4 L420.0,260.2 L419.8,263.1 L419.6,266.1 L419.3,269.0 L418.9,271.8 L418.4,274.6 L417.9,277.4 L417.4,280.2 L417.0,283.0 L416.5,285.8 L416.0,288.6 L415.5,291.4 L415.0,294.2 L414.5,297.0 L413.8,300.0 L413.0,303.3 L412.1,306.4 L411.4,309.1 L411.0,311.0Z" fill="#bdbdbd"/></g>
<g style="mix-blend-mode:lighten"><path d="M25.2,215.2 L25.5,213.3 L25.8,210.6 L26.1,207.5 L26.5,204.2 L26.9,201.2 L27.4,198.4 L27.9,195.7 L28.4,192.9 L28.9,190.2 L29.5,187.4 L30.1,184.7 L30.8,181.9 L31.5,179.2 L32.2,176.4 L32.9,173.6 L33.7,170.8 L34.4,168.0 L35.2,165.2 L35.9,162.4 L36.7,159.7 L37.4,156.9 L38.1,154.1 L38.9,151.4 L39.6,149.0 L40.4,147.1 L41.7,144.7 L43.1,143.0 L44.5,141.5 L46.9,138.9 L49.5,136.2 L51.8,133.2 L53.9,130.0 L55.5,126.7 L56.8,123.6 L58.3,120.5 L60.1,117.2 L61.7,114.0 L63.3,111.1 L65.1,108.3 L67.3,105.2 L69.2,102.5 L71.2,100.6 L72.5,99.9 L74.8,98.6 L77.1,97.3 L78.7,96.3 L71.3,85.7 L69.9,86.9 L67.7,88.7 L65.3,90.8 L62.8,93.4 L60.7,97.5 L59.5,100.8 L57.8,103.7 L55.9,106.9 L54.3,110.0 L52.7,112.8 L50.6,115.5 L48.2,118.4 L46.1,121.3 L44.1,124.0 L42.3,126.8 L40.5,129.8 L38.7,133.0 L36.9,136.5 L35.9,139.1 L35.1,141.7 L34.2,144.9 L33.7,147.4 L33.1,150.0 L32.5,152.8 L31.9,155.6 L31.3,158.3 L30.7,161.1 L30.0,163.9 L29.4,166.7 L28.7,169.6 L28.1,172.4 L27.4,175.2 L26.8,178.0 L26.2,180.9 L25.6,183.7 L25.1,186.6 L24.7,189.4 L24.3,192.3 L24.1,195.1 L23.8,198.0 L23.5,200.8 L23.1,203.8 L22.7,207.1 L22.3,210.2 L22.0,212.9 L21.8,214.8Z" fill="#1a1a1a"/><path d="M24.9,215.2 L25.1,213.3 L25.4,210.6 L25.8,207.4 L26.2,204.2 L26.6,201.2 L27.1,198.4 L27.5,195.6 L28.0,192.9 L28.5,190.1 L29.1,187.3 L29.7,184.6 L30.4,181.8 L31.1,179.1 L31.8,176.3 L32.5,173.5 L33.2,170.7 L33.9,167.9 L34.7,165.1 L35.4,162.3 L36.2,159.5 L36.9,156.8 L37.6,154.0 L38.4,151.3 L39.1,148.9 L39.8,146.9 L41.1,144.4 L42.4,142.6 L43.8,141.0 L46.2,138.4 L48.7,135.6 L51.0,132.6 L53.0,129.5 L54.6,126.2 L56.0,123.2 L57.6,120.0 L59.4,116.8 L61.0,113.6 L62.6,110.7 L64.5,107.9 L66.6,104.8 L68.4,102.1 L70.4,99.9 L71.8,99.1 L74.1,97.7 L76.4,96.3 L78.1,95.4 L71.9,86.6 L70.5,87.8 L68.3,89.6 L65.9,91.7 L63.6,94.1 L61.5,97.9 L60.2,101.2 L58.5,104.1 L56.6,107.3 L55.0,110.4 L53.4,113.2 L51.3,116.0 L49.0,118.8 L46.9,121.8 L45.0,124.5 L43.1,127.4 L41.3,130.4 L39.4,133.5 L37.6,137.0 L36.6,139.4 L35.7,142.0 L34.8,145.1 L34.2,147.5 L33.6,150.1 L33.0,152.9 L32.4,155.7 L31.8,158.5 L31.2,161.2 L30.5,164.0 L29.8,166.8 L29.2,169.7 L28.5,172.5 L27.9,175.3 L27.2,178.1 L26.6,181.0 L26.0,183.8 L25.5,186.7 L25.1,189.5 L24.7,192.3 L24.4,195.2 L24.1,198.0 L23.8,200.8 L23.4,203.8 L23.0,207.1 L22.6,210.2 L22.3,212.9 L22.1,214.8Z" fill="#474747"/><path d="M24.6,215.1 L24.9,213.2 L25.2,210.5 L25.5,207.4 L25.9,204.2 L26.3,201.2 L26.8,198.4 L27.2,195.6 L27.7,192.8 L28.2,190.0 L28.8,187.3 L29.4,184.5 L30.0,181.7 L30.7,179.0 L31.4,176.2 L32.1,173.4 L32.8,170.6 L33.5,167.8 L34.3,165.0 L35.0,162.2 L35.8,159.4 L36.5,156.7 L37.2,153.9 L37.9,151.2 L38.6,148.7 L39.3,146.7 L40.6,144.2 L41.9,142.3 L43.2,140.6 L45.5,137.9 L48.0,135.1 L50.2,132.1 L52.2,129.0 L53.9,125.8 L55.3,122.7 L57.0,119.6 L58.8,116.4 L60.4,113.3 L62.0,110.4 L63.9,107.5 L66.0,104.5 L67.7,101.7 L69.8,99.3 L71.3,98.3 L73.6,96.9 L75.8,95.5 L77.5,94.5 L72.5,87.5 L71.1,88.7 L68.9,90.4 L66.5,92.4 L64.2,94.7 L62.1,98.3 L60.8,101.5 L59.1,104.5 L57.2,107.6 L55.6,110.7 L54.0,113.6 L51.9,116.4 L49.7,119.3 L47.7,122.2 L45.8,125.0 L43.9,127.9 L42.0,130.9 L40.1,134.0 L38.2,137.4 L37.1,139.7 L36.2,142.2 L35.3,145.3 L34.7,147.7 L34.1,150.2 L33.5,153.0 L32.9,155.8 L32.2,158.6 L31.6,161.3 L30.9,164.1 L30.2,166.9 L29.6,169.8 L28.9,172.6 L28.2,175.4 L27.6,178.2 L27.0,181.1 L26.4,183.9 L25.8,186.7 L25.4,189.6 L25.0,192.4 L24.7,195.2 L24.4,198.0 L24.1,200.8 L23.7,203.9 L23.3,207.1 L22.9,210.3 L22.6,213.0 L22.4,214.9Z" fill="#7a7a7a"/><path d="M23.5,215.0 L23.8,213.1 L24.1,210.4 L24.5,207.3 L24.9,204.0 L25.2,201.0 L25.6,198.2 L26.0,195.4 L26.4,192.6 L26.9,189.8 L27.3,187.0 L27.9,184.2 L28.5,181.4 L29.2,178.6 L29.9,175.8 L30.6,173.0 L31.3,170.2 L32.0,167.4 L32.7,164.6 L33.5,161.8 L34.2,159.0 L34.9,156.3 L35.6,153.5 L36.4,150.8 L37.1,148.3 L37.8,146.2 L39.1,143.5 L40.3,141.5 L41.6,139.6 L43.9,136.7 L46.3,133.9 L48.5,131.0 L50.6,128.0 L52.2,124.8 L53.7,121.8 L55.5,118.7 L57.3,115.5 L58.9,112.5 L60.5,109.5 L62.5,106.6 L64.5,103.6 L66.2,100.7 L68.2,98.0 L69.9,96.6 L72.2,95.0 L74.5,93.6 L76.1,92.5 L73.9,89.5 L72.4,90.6 L70.2,92.2 L67.8,94.1 L65.8,96.0 L63.7,99.3 L62.3,102.4 L60.5,105.4 L58.7,108.5 L57.1,111.5 L55.5,114.5 L53.4,117.3 L51.3,120.2 L49.3,123.2 L47.4,126.0 L45.6,129.0 L43.7,132.1 L41.7,135.1 L39.8,138.4 L38.7,140.6 L37.7,142.9 L36.8,145.8 L36.2,148.1 L35.6,150.6 L35.0,153.4 L34.4,156.2 L33.8,159.0 L33.2,161.7 L32.5,164.5 L31.8,167.3 L31.1,170.2 L30.4,173.0 L29.8,175.8 L29.1,178.6 L28.4,181.4 L27.8,184.2 L27.3,187.0 L26.8,189.8 L26.3,192.6 L25.9,195.4 L25.5,198.2 L25.2,201.0 L24.8,204.0 L24.4,207.3 L24.0,210.4 L23.7,213.1 L23.5,215.0Z" fill="#9e9e9e"/><path d="M23.5,215.0 L23.8,213.1 L24.1,210.4 L24.5,207.3 L24.9,204.0 L25.2,201.0 L25.6,198.2 L26.0,195.4 L26.4,192.6 L26.9,189.8 L27.3,187.0 L27.9,184.2 L28.5,181.4 L29.2,178.6 L29.9,175.8 L30.5,173.0 L31.2,170.2 L31.9,167.4 L32.7,164.5 L33.4,161.8 L34.1,159.0 L34.8,156.3 L35.5,153.5 L36.2,150.8 L36.9,148.3 L37.6,146.1 L38.8,143.3 L39.9,141.3 L41.2,139.3 L43.4,136.4 L45.7,133.5 L47.8,130.5 L49.8,127.5 L51.5,124.4 L53.1,121.4 L55.0,118.3 L56.9,115.3 L58.5,112.3 L60.1,109.3 L62.0,106.3 L64.0,103.3 L65.6,100.4 L67.6,97.5 L69.4,96.0 L71.8,94.4 L74.0,92.9 L75.6,91.8 L74.4,90.2 L72.9,91.3 L70.7,92.9 L68.3,94.7 L66.4,96.5 L64.3,99.6 L62.8,102.7 L61.0,105.7 L59.1,108.7 L57.5,111.7 L55.9,114.7 L53.9,117.7 L51.9,120.6 L50.0,123.6 L48.2,126.5 L46.3,129.5 L44.3,132.5 L42.2,135.5 L40.2,138.7 L39.1,140.8 L38.0,143.0 L37.0,145.9 L36.4,148.1 L35.8,150.7 L35.2,153.4 L34.5,156.2 L33.9,159.0 L33.2,161.7 L32.5,164.5 L31.8,167.3 L31.1,170.2 L30.5,173.0 L29.8,175.8 L29.1,178.6 L28.4,181.4 L27.8,184.2 L27.3,187.0 L26.8,189.8 L26.3,192.6 L25.9,195.4 L25.5,198.2 L25.2,201.0 L24.8,204.0 L24.4,207.3 L24.0,210.4 L23.7,213.1 L23.5,215.0Z" fill="#bdbdbd"/></g>
</g></g>
<path d="M339,15 L350,15 L344.5,22 Z" fill="#f59000"/><rect x="340" y="15" width="9" height="2" fill="#e84a00"/>
<rect x="7" y="198" width="8" height="8" fill="#2cb02c"/><rect x="16" y="198" width="7" height="8" fill="#2cb02c"/>
<path d="M19,200 L22,202 L19,204 Z" fill="#0a300a"/>
<text x="11" y="205" font-size="8" fill="#0a300a" font-family="Liberation Sans" text-anchor="middle">4</text>
<rect x="28" y="20" width="149" height="60" fill="#ffffff"/>
<rect x="524" y="31" width="113" height="44" fill="#225688"/><rect x="524" y="31" width="113" height="1" fill="#1c3d63"/><rect x="524" y="31" width="1" height="44" fill="#1c3d63"/>
<rect x="534" y="55" width="94" height="18" fill="#3474b6"/>
<rect x="524" y="80" width="113" height="44" fill="#225688"/><rect x="524" y="80" width="113" height="1" fill="#1c3d63"/><rect x="524" y="80" width="1" height="44" fill="#1c3d63"/>
<rect x="534" y="103" width="94" height="18" fill="#3474b6"/>
<polygon points="590.5,11 596,7 605,5.5 622,5.5 630,7.5 635.5,12.5 635.5,20 630,24.5 622,26 605,26 596,24.5 590.5,20" fill="#cdcdd2" stroke="#0a0a0a" stroke-width="1"/>
<polyline points="591.5,19 591.5,11.5 596.5,8 605,6.5 621,6.5" fill="none" stroke="#f4f4f8" stroke-width="1"/>
<rect x="636" y="2" width="1" height="25" fill="#101820"/>
</svg>
<div class="t" style="left:2px;top:3px;font-size:11.5px;color:#fff">Tek</div>
<div class="t" style="left:39px;top:3px;font-size:11px;color:#a9bdd3;transform:scaleX(0.875);transform-origin:0 0">FastAcq</div>
<div class="t" style="left:90px;top:3px;font-size:11px;color:#a9bdd3;transform:scaleX(0.885);transform-origin:0 0">Sample</div>
<div class="t" style="left:399px;top:3px;font-size:11px;color:#c8d4e0;transform:scaleX(0.954);transform-origin:0 0">07 Sep 11 05:59:54</div>
<div class="t" style="left:595px;top:12px;font-size:10px;color:#000;letter-spacing:0.25px">Buttons</div>
<div class="t" style="left:549px;top:39px;font-size:11px;font-weight:bold;color:#fff;letter-spacing:0.75px">Ch4 Offset</div>
<div class="t" style="left:570px;top:58px;font-size:11px;color:#e8eef8;letter-spacing:0.3px">2.5V</div>
<div class="t" style="left:550px;top:88px;font-size:11px;font-weight:bold;color:#fff;letter-spacing:1px">Ch4 Scale</div>
<div class="t" style="left:570px;top:107px;font-size:11px;color:#e8eef8;letter-spacing:0.3px">1.0V</div>
<div class="t" id="l1" style="left:32px;top:26px;font-size:12px;color:#000;transform:scaleX(0.965);transform-origin:0 0">T<span style="font-size:8.5px;position:relative;top:1.5px">A</span> = 25<span style="font-size:9px;position:relative;top:-5px">o</span>C, C<span style="font-size:8.5px;position:relative;top:1.5px">L</span> = 15 pF</div>
<div class="t" id="l2" style="left:32px;top:45px;font-size:12px;color:#000">V<span style="font-size:8.5px;position:relative;top:1.5px;letter-spacing:0.3px">CC1</span> = V<span style="font-size:8.5px;position:relative;top:1.5px;letter-spacing:0.3px">CC2</span> = 5 V</div>
<div class="t" id="l3" style="left:32px;top:65px;font-size:12px;color:#000;transform:scaleX(0.965);transform-origin:0 0">Pattern: NRZ 2<span style="font-size:9px;position:relative;top:-5px">16</span>-1</div>
<div class="t" style="left:173px;top:406px;font-size:10px;color:#3cc03c">Ch4</div>
<div class="t" style="left:214px;top:406px;font-size:10px;color:#3cc03c">1.0V</div>
<div class="t" style="left:255px;top:406px;font-size:10px;color:#3cc03c">&#937;</div>
<div class="t" style="left:322px;top:395px;font-size:10px;color:#e0e0e0;transform:scaleX(1.01);transform-origin:0 0">M 2.5ns 20.0GS/s</div>
<div class="t" style="left:423px;top:395px;font-size:10px;color:#e0e0e0">ET 50.0ps/pt</div>
<div class="t" style="left:322px;top:405px;font-size:10px;color:#e0e0e0">A</div>
<div class="t" style="left:335px;top:405px;font-size:10px;color:#e0e0e0">Aux</div>
<svg width="10" height="10" style="position:absolute;left:359px;top:406px"><path d="M1,7.5 H3 L7,1.5 H9" fill="none" stroke="#e0e0e0" stroke-width="1"/></svg>
<div class="t" style="left:374px;top:405px;font-size:10px;color:#e0e0e0">-1.2V</div>
</body></html>
